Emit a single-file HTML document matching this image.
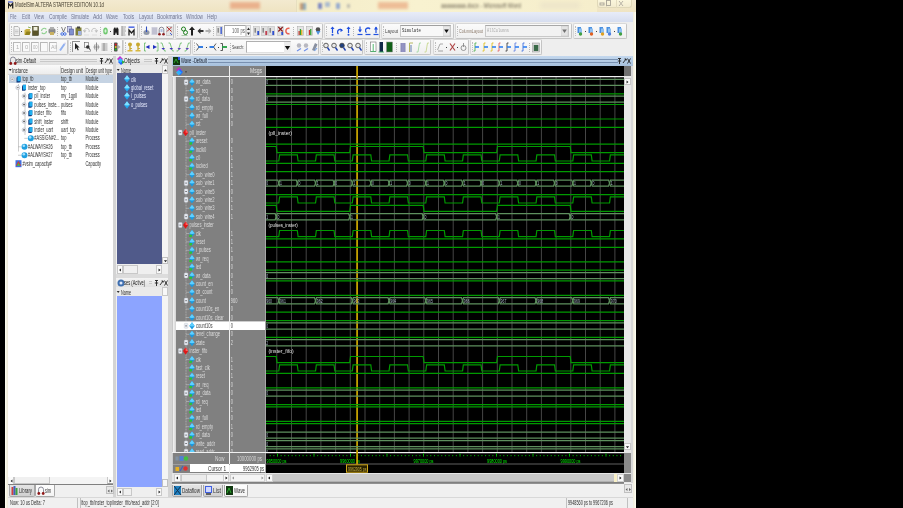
<!DOCTYPE html><html><head><meta charset="utf-8"><style>
*{margin:0;padding:0;box-sizing:border-box}
html,body{width:903px;height:508px;overflow:hidden;background:#000}
body{position:relative;font-family:"Liberation Sans",sans-serif}
div,span,svg{position:absolute}
.t{white-space:nowrap;transform-origin:0 0}
</style></head><body><div style="left:0;top:0;width:903px;height:508px;overflow:hidden;will-change:transform"><div style="left:5px;top:0px;width:631px;height:508px;background:#f0f0f0"></div><div style="left:5px;top:0px;width:3px;height:508px;background:linear-gradient(90deg,#fffff2,#ece8d8)"></div><div style="left:633px;top:0px;width:3px;height:508px;background:linear-gradient(90deg,#f0ecdc,#fffff2)"></div><div style="left:5px;top:0px;width:631px;height:12px;background:linear-gradient(180deg,#f3ead0,#efe4c2)"></div><div style="left:8px;top:12px;width:625px;height:10px;background:linear-gradient(180deg,#e8ecf8,#d6ddef)"></div><div style="left:8px;top:22px;width:625px;height:34px;background:#eeeeee"></div><div style="left:8px;top:56px;width:105px;height:428px;background:#ffffff"></div><div style="left:113px;top:56px;width:3px;height:441px;background:#d4d4d4"></div><div style="left:116px;top:56px;width:52px;height:9px;background:#e4e4e4"></div><div style="left:116px;top:65px;width:46px;height:8px;background:#eaeaea"></div><div style="left:117px;top:73px;width:45px;height:191px;background:#505a8a"></div><div style="left:162px;top:65px;width:6px;height:199px;background:#f4f4f4"></div><div style="left:116px;top:264px;width:52px;height:10px;background:#efefef"></div><div style="left:116px;top:274px;width:52px;height:4px;background:#dcdcdc"></div><div style="left:116px;top:278px;width:52px;height:9px;background:#e4e4e4"></div><div style="left:116px;top:287px;width:46px;height:9px;background:#eaeaea"></div><div style="left:117px;top:296px;width:45px;height:191px;background:#8ca4ff"></div><div style="left:162px;top:287px;width:6px;height:200px;background:#f4f4f4"></div><div style="left:116px;top:487px;width:52px;height:10px;background:#efefef"></div><div style="left:168px;top:56px;width:4px;height:441px;background:#d4d4d4"></div><div style="left:172px;top:56px;width:461px;height:10px;background:linear-gradient(180deg,#c4d8ee,#a6c0dc)"></div><div style="left:172px;top:66px;width:452px;height:11px;background:#808080"></div><div style="left:266px;top:66px;width:358px;height:11px;background:#000"></div><div style="left:172px;top:77px;width:94px;height:376px;background:#808080"></div><div style="left:266px;top:77px;width:358px;height:376px;background:#000"></div><div style="left:172px;top:453px;width:94px;height:20px;background:#808080"></div><div style="left:266px;top:453px;width:358px;height:20px;background:#000"></div><div style="left:624px;top:66px;width:8px;height:417px;background:#e8e8e8"></div><div style="left:172px;top:473px;width:452px;height:10px;background:#dddddd"></div><svg style="left:266.0px;top:66px" width="358.0" height="407" viewBox="266.0 66 358.0 407"><defs><clipPath id="rc"><rect x="266" y="77" width="358" height="375.2"/></clipPath></defs><g clip-path="url(#rc)"><line x1="276.80" y1="77" x2="276.80" y2="452.5" stroke="#464646" stroke-width="1"/><line x1="291.50" y1="77" x2="291.50" y2="452.5" stroke="#464646" stroke-width="1"/><line x1="306.20" y1="77" x2="306.20" y2="452.5" stroke="#464646" stroke-width="1"/><line x1="320.90" y1="77" x2="320.90" y2="452.5" stroke="#464646" stroke-width="1"/><line x1="335.60" y1="77" x2="335.60" y2="452.5" stroke="#464646" stroke-width="1"/><line x1="350.30" y1="77" x2="350.30" y2="452.5" stroke="#464646" stroke-width="1"/><line x1="365.00" y1="77" x2="365.00" y2="452.5" stroke="#464646" stroke-width="1"/><line x1="379.70" y1="77" x2="379.70" y2="452.5" stroke="#464646" stroke-width="1"/><line x1="394.40" y1="77" x2="394.40" y2="452.5" stroke="#464646" stroke-width="1"/><line x1="409.10" y1="77" x2="409.10" y2="452.5" stroke="#464646" stroke-width="1"/><line x1="423.80" y1="77" x2="423.80" y2="452.5" stroke="#464646" stroke-width="1"/><line x1="438.50" y1="77" x2="438.50" y2="452.5" stroke="#464646" stroke-width="1"/><line x1="453.20" y1="77" x2="453.20" y2="452.5" stroke="#464646" stroke-width="1"/><line x1="467.90" y1="77" x2="467.90" y2="452.5" stroke="#464646" stroke-width="1"/><line x1="482.60" y1="77" x2="482.60" y2="452.5" stroke="#464646" stroke-width="1"/><line x1="497.30" y1="77" x2="497.30" y2="452.5" stroke="#464646" stroke-width="1"/><line x1="512.00" y1="77" x2="512.00" y2="452.5" stroke="#464646" stroke-width="1"/><line x1="526.70" y1="77" x2="526.70" y2="452.5" stroke="#464646" stroke-width="1"/><line x1="541.40" y1="77" x2="541.40" y2="452.5" stroke="#464646" stroke-width="1"/><line x1="556.10" y1="77" x2="556.10" y2="452.5" stroke="#464646" stroke-width="1"/><line x1="570.80" y1="77" x2="570.80" y2="452.5" stroke="#464646" stroke-width="1"/><line x1="585.50" y1="77" x2="585.50" y2="452.5" stroke="#464646" stroke-width="1"/><line x1="600.20" y1="77" x2="600.20" y2="452.5" stroke="#464646" stroke-width="1"/><line x1="614.90" y1="77" x2="614.90" y2="452.5" stroke="#464646" stroke-width="1"/><line x1="357.1" y1="77" x2="357.1" y2="452" stroke="#c4a000" stroke-width="1.8"/><path d="M266.00,79.30 L266.00,79.30 L624.00,79.30 L624.00,79.30" fill="none" stroke="#5e905e" stroke-width="1.25"/><path d="M266.00,85.40 L266.00,85.40 L624.00,85.40 L624.00,85.40" fill="none" stroke="#5e905e" stroke-width="1.25"/><text x="266.30" y="84.40" font-size="5.2" fill="#a8b8c8" font-family="Liberation Sans" textLength="1.9" lengthAdjust="spacingAndGlyphs">0</text><line x1="266.0" y1="93.80" x2="624.0" y2="93.80" stroke="#009a00" stroke-width="1.2"/><path d="M266.00,96.10 L266.00,96.10 L624.00,96.10 L624.00,96.10" fill="none" stroke="#5e905e" stroke-width="1.25"/><path d="M266.00,102.20 L266.00,102.20 L624.00,102.20 L624.00,102.20" fill="none" stroke="#5e905e" stroke-width="1.25"/><text x="266.30" y="101.20" font-size="5.2" fill="#a8b8c8" font-family="Liberation Sans" textLength="1.9" lengthAdjust="spacingAndGlyphs">0</text><line x1="266.0" y1="104.50" x2="624.0" y2="104.50" stroke="#009a00" stroke-width="1.2"/><line x1="266.0" y1="119.00" x2="624.0" y2="119.00" stroke="#009a00" stroke-width="1.2"/><line x1="266.0" y1="127.40" x2="624.0" y2="127.40" stroke="#009a00" stroke-width="1.2"/><text x="268.5" y="134.70" font-size="5.6" fill="#e8e8e8" font-family="Liberation Sans" textLength="23.4" lengthAdjust="spacingAndGlyphs">(pll_inster)</text><line x1="266.0" y1="144.20" x2="624.0" y2="144.20" stroke="#009a00" stroke-width="1.2"/><path d="M266.00,146.50 L276.20,146.50 L277.00,152.60 L349.70,152.60 L350.50,146.50 L423.20,146.50 L424.00,152.60 L496.70,152.60 L497.50,146.50 L570.20,146.50 L571.00,152.60 L624.00,152.60" fill="none" stroke="#009a00" stroke-width="1.2"/><path d="M266.00,161.00 L278.80,161.00 L279.60,154.90 L297.30,154.90 L298.10,161.00 L315.55,161.00 L316.35,154.90 L334.05,154.90 L334.85,161.00 L352.30,161.00 L353.10,154.90 L370.80,154.90 L371.60,161.00 L389.05,161.00 L389.85,154.90 L407.55,154.90 L408.35,161.00 L425.80,161.00 L426.60,154.90 L444.30,154.90 L445.10,161.00 L462.55,161.00 L463.35,154.90 L481.05,154.90 L481.85,161.00 L499.30,161.00 L500.10,154.90 L517.80,154.90 L518.60,161.00 L536.05,161.00 L536.85,154.90 L554.55,154.90 L555.35,161.00 L572.80,161.00 L573.60,154.90 L591.30,154.90 L592.10,161.00 L609.55,161.00 L610.35,154.90 L624.00,154.90" fill="none" stroke="#009a00" stroke-width="1.2"/><line x1="266.0" y1="163.30" x2="624.0" y2="163.30" stroke="#009a00" stroke-width="1.2"/><line x1="266.0" y1="171.70" x2="624.0" y2="171.70" stroke="#009a00" stroke-width="1.2"/><path d="M266.00,180.10 L266.00,180.10 L277.80,180.10 L278.80,183.15" fill="none" stroke="#5e905e" stroke-width="1.25"/><path d="M266.00,186.20 L266.00,186.20 L277.80,186.20 L278.80,183.15" fill="none" stroke="#5e905e" stroke-width="1.25"/><text x="266.30" y="185.20" font-size="5.2" fill="#a8b8c8" font-family="Liberation Sans" textLength="1.9" lengthAdjust="spacingAndGlyphs">0</text><path d="M278.80,183.15 L279.80,180.10 L296.30,180.10 L297.30,183.15" fill="none" stroke="#5e905e" stroke-width="1.25"/><path d="M278.80,183.15 L279.80,186.20 L296.30,186.20 L297.30,183.15" fill="none" stroke="#5e905e" stroke-width="1.25"/><text x="280.10" y="185.20" font-size="5.2" fill="#a8b8c8" font-family="Liberation Sans" textLength="1.9" lengthAdjust="spacingAndGlyphs">1</text><path d="M297.30,183.15 L298.30,180.10 L314.55,180.10 L315.55,183.15" fill="none" stroke="#5e905e" stroke-width="1.25"/><path d="M297.30,183.15 L298.30,186.20 L314.55,186.20 L315.55,183.15" fill="none" stroke="#5e905e" stroke-width="1.25"/><text x="298.60" y="185.20" font-size="5.2" fill="#a8b8c8" font-family="Liberation Sans" textLength="1.9" lengthAdjust="spacingAndGlyphs">0</text><path d="M315.55,183.15 L316.55,180.10 L333.05,180.10 L334.05,183.15" fill="none" stroke="#5e905e" stroke-width="1.25"/><path d="M315.55,183.15 L316.55,186.20 L333.05,186.20 L334.05,183.15" fill="none" stroke="#5e905e" stroke-width="1.25"/><text x="316.85" y="185.20" font-size="5.2" fill="#a8b8c8" font-family="Liberation Sans" textLength="1.9" lengthAdjust="spacingAndGlyphs">1</text><path d="M334.05,183.15 L335.05,180.10 L351.30,180.10 L352.30,183.15" fill="none" stroke="#5e905e" stroke-width="1.25"/><path d="M334.05,183.15 L335.05,186.20 L351.30,186.20 L352.30,183.15" fill="none" stroke="#5e905e" stroke-width="1.25"/><text x="335.35" y="185.20" font-size="5.2" fill="#a8b8c8" font-family="Liberation Sans" textLength="1.9" lengthAdjust="spacingAndGlyphs">0</text><path d="M352.30,183.15 L353.30,180.10 L369.80,180.10 L370.80,183.15" fill="none" stroke="#5e905e" stroke-width="1.25"/><path d="M352.30,183.15 L353.30,186.20 L369.80,186.20 L370.80,183.15" fill="none" stroke="#5e905e" stroke-width="1.25"/><text x="353.60" y="185.20" font-size="5.2" fill="#a8b8c8" font-family="Liberation Sans" textLength="1.9" lengthAdjust="spacingAndGlyphs">1</text><path d="M370.80,183.15 L371.80,180.10 L388.05,180.10 L389.05,183.15" fill="none" stroke="#5e905e" stroke-width="1.25"/><path d="M370.80,183.15 L371.80,186.20 L388.05,186.20 L389.05,183.15" fill="none" stroke="#5e905e" stroke-width="1.25"/><text x="372.10" y="185.20" font-size="5.2" fill="#a8b8c8" font-family="Liberation Sans" textLength="1.9" lengthAdjust="spacingAndGlyphs">0</text><path d="M389.05,183.15 L390.05,180.10 L406.55,180.10 L407.55,183.15" fill="none" stroke="#5e905e" stroke-width="1.25"/><path d="M389.05,183.15 L390.05,186.20 L406.55,186.20 L407.55,183.15" fill="none" stroke="#5e905e" stroke-width="1.25"/><text x="390.35" y="185.20" font-size="5.2" fill="#a8b8c8" font-family="Liberation Sans" textLength="1.9" lengthAdjust="spacingAndGlyphs">1</text><path d="M407.55,183.15 L408.55,180.10 L424.80,180.10 L425.80,183.15" fill="none" stroke="#5e905e" stroke-width="1.25"/><path d="M407.55,183.15 L408.55,186.20 L424.80,186.20 L425.80,183.15" fill="none" stroke="#5e905e" stroke-width="1.25"/><text x="408.85" y="185.20" font-size="5.2" fill="#a8b8c8" font-family="Liberation Sans" textLength="1.9" lengthAdjust="spacingAndGlyphs">0</text><path d="M425.80,183.15 L426.80,180.10 L443.30,180.10 L444.30,183.15" fill="none" stroke="#5e905e" stroke-width="1.25"/><path d="M425.80,183.15 L426.80,186.20 L443.30,186.20 L444.30,183.15" fill="none" stroke="#5e905e" stroke-width="1.25"/><text x="427.10" y="185.20" font-size="5.2" fill="#a8b8c8" font-family="Liberation Sans" textLength="1.9" lengthAdjust="spacingAndGlyphs">1</text><path d="M444.30,183.15 L445.30,180.10 L461.55,180.10 L462.55,183.15" fill="none" stroke="#5e905e" stroke-width="1.25"/><path d="M444.30,183.15 L445.30,186.20 L461.55,186.20 L462.55,183.15" fill="none" stroke="#5e905e" stroke-width="1.25"/><text x="445.60" y="185.20" font-size="5.2" fill="#a8b8c8" font-family="Liberation Sans" textLength="1.9" lengthAdjust="spacingAndGlyphs">0</text><path d="M462.55,183.15 L463.55,180.10 L480.05,180.10 L481.05,183.15" fill="none" stroke="#5e905e" stroke-width="1.25"/><path d="M462.55,183.15 L463.55,186.20 L480.05,186.20 L481.05,183.15" fill="none" stroke="#5e905e" stroke-width="1.25"/><text x="463.85" y="185.20" font-size="5.2" fill="#a8b8c8" font-family="Liberation Sans" textLength="1.9" lengthAdjust="spacingAndGlyphs">1</text><path d="M481.05,183.15 L482.05,180.10 L498.30,180.10 L499.30,183.15" fill="none" stroke="#5e905e" stroke-width="1.25"/><path d="M481.05,183.15 L482.05,186.20 L498.30,186.20 L499.30,183.15" fill="none" stroke="#5e905e" stroke-width="1.25"/><text x="482.35" y="185.20" font-size="5.2" fill="#a8b8c8" font-family="Liberation Sans" textLength="1.9" lengthAdjust="spacingAndGlyphs">0</text><path d="M499.30,183.15 L500.30,180.10 L516.80,180.10 L517.80,183.15" fill="none" stroke="#5e905e" stroke-width="1.25"/><path d="M499.30,183.15 L500.30,186.20 L516.80,186.20 L517.80,183.15" fill="none" stroke="#5e905e" stroke-width="1.25"/><text x="500.60" y="185.20" font-size="5.2" fill="#a8b8c8" font-family="Liberation Sans" textLength="1.9" lengthAdjust="spacingAndGlyphs">1</text><path d="M517.80,183.15 L518.80,180.10 L535.05,180.10 L536.05,183.15" fill="none" stroke="#5e905e" stroke-width="1.25"/><path d="M517.80,183.15 L518.80,186.20 L535.05,186.20 L536.05,183.15" fill="none" stroke="#5e905e" stroke-width="1.25"/><text x="519.10" y="185.20" font-size="5.2" fill="#a8b8c8" font-family="Liberation Sans" textLength="1.9" lengthAdjust="spacingAndGlyphs">0</text><path d="M536.05,183.15 L537.05,180.10 L553.55,180.10 L554.55,183.15" fill="none" stroke="#5e905e" stroke-width="1.25"/><path d="M536.05,183.15 L537.05,186.20 L553.55,186.20 L554.55,183.15" fill="none" stroke="#5e905e" stroke-width="1.25"/><text x="537.35" y="185.20" font-size="5.2" fill="#a8b8c8" font-family="Liberation Sans" textLength="1.9" lengthAdjust="spacingAndGlyphs">1</text><path d="M554.55,183.15 L555.55,180.10 L571.80,180.10 L572.80,183.15" fill="none" stroke="#5e905e" stroke-width="1.25"/><path d="M554.55,183.15 L555.55,186.20 L571.80,186.20 L572.80,183.15" fill="none" stroke="#5e905e" stroke-width="1.25"/><text x="555.85" y="185.20" font-size="5.2" fill="#a8b8c8" font-family="Liberation Sans" textLength="1.9" lengthAdjust="spacingAndGlyphs">0</text><path d="M572.80,183.15 L573.80,180.10 L590.30,180.10 L591.30,183.15" fill="none" stroke="#5e905e" stroke-width="1.25"/><path d="M572.80,183.15 L573.80,186.20 L590.30,186.20 L591.30,183.15" fill="none" stroke="#5e905e" stroke-width="1.25"/><text x="574.10" y="185.20" font-size="5.2" fill="#a8b8c8" font-family="Liberation Sans" textLength="1.9" lengthAdjust="spacingAndGlyphs">1</text><path d="M591.30,183.15 L592.30,180.10 L608.55,180.10 L609.55,183.15" fill="none" stroke="#5e905e" stroke-width="1.25"/><path d="M591.30,183.15 L592.30,186.20 L608.55,186.20 L609.55,183.15" fill="none" stroke="#5e905e" stroke-width="1.25"/><text x="592.60" y="185.20" font-size="5.2" fill="#a8b8c8" font-family="Liberation Sans" textLength="1.9" lengthAdjust="spacingAndGlyphs">0</text><path d="M609.55,183.15 L610.55,180.10 L624.00,180.10 L624.00,180.10" fill="none" stroke="#5e905e" stroke-width="1.25"/><path d="M609.55,183.15 L610.55,186.20 L624.00,186.20 L624.00,186.20" fill="none" stroke="#5e905e" stroke-width="1.25"/><text x="610.85" y="185.20" font-size="5.2" fill="#a8b8c8" font-family="Liberation Sans" textLength="1.9" lengthAdjust="spacingAndGlyphs">1</text><line x1="266.0" y1="194.60" x2="624.0" y2="194.60" stroke="#009a00" stroke-width="1.2"/><path d="M266.00,203.00 L278.80,203.00 L279.60,196.90 L297.30,196.90 L298.10,203.00 L315.55,203.00 L316.35,196.90 L334.05,196.90 L334.85,203.00 L352.30,203.00 L353.10,196.90 L370.80,196.90 L371.60,203.00 L389.05,203.00 L389.85,196.90 L407.55,196.90 L408.35,203.00 L425.80,203.00 L426.60,196.90 L444.30,196.90 L445.10,203.00 L462.55,203.00 L463.35,196.90 L481.05,196.90 L481.85,203.00 L499.30,203.00 L500.10,196.90 L517.80,196.90 L518.60,203.00 L536.05,203.00 L536.85,196.90 L554.55,196.90 L555.35,203.00 L572.80,203.00 L573.60,196.90 L591.30,196.90 L592.10,203.00 L609.55,203.00 L610.35,196.90 L624.00,196.90" fill="none" stroke="#009a00" stroke-width="1.2"/><path d="M266.00,205.30 L276.20,205.30 L277.00,211.40 L349.70,211.40 L350.50,205.30 L423.20,205.30 L424.00,211.40 L496.70,211.40 L497.50,205.30 L570.20,205.30 L571.00,211.40 L624.00,211.40" fill="none" stroke="#009a00" stroke-width="1.2"/><path d="M266.00,213.70 L266.00,213.70 L275.20,213.70 L276.20,216.75" fill="none" stroke="#5e905e" stroke-width="1.25"/><path d="M266.00,219.80 L266.00,219.80 L275.20,219.80 L276.20,216.75" fill="none" stroke="#5e905e" stroke-width="1.25"/><text x="266.30" y="218.80" font-size="5.2" fill="#a8b8c8" font-family="Liberation Sans" textLength="1.9" lengthAdjust="spacingAndGlyphs">1</text><path d="M276.20,216.75 L277.20,213.70 L348.70,213.70 L349.70,216.75" fill="none" stroke="#5e905e" stroke-width="1.25"/><path d="M276.20,216.75 L277.20,219.80 L348.70,219.80 L349.70,216.75" fill="none" stroke="#5e905e" stroke-width="1.25"/><text x="277.50" y="218.80" font-size="5.2" fill="#a8b8c8" font-family="Liberation Sans" textLength="1.9" lengthAdjust="spacingAndGlyphs">0</text><path d="M349.70,216.75 L350.70,213.70 L422.20,213.70 L423.20,216.75" fill="none" stroke="#5e905e" stroke-width="1.25"/><path d="M349.70,216.75 L350.70,219.80 L422.20,219.80 L423.20,216.75" fill="none" stroke="#5e905e" stroke-width="1.25"/><text x="351.00" y="218.80" font-size="5.2" fill="#a8b8c8" font-family="Liberation Sans" textLength="1.9" lengthAdjust="spacingAndGlyphs">1</text><path d="M423.20,216.75 L424.20,213.70 L495.70,213.70 L496.70,216.75" fill="none" stroke="#5e905e" stroke-width="1.25"/><path d="M423.20,216.75 L424.20,219.80 L495.70,219.80 L496.70,216.75" fill="none" stroke="#5e905e" stroke-width="1.25"/><text x="424.50" y="218.80" font-size="5.2" fill="#a8b8c8" font-family="Liberation Sans" textLength="1.9" lengthAdjust="spacingAndGlyphs">0</text><path d="M496.70,216.75 L497.70,213.70 L569.20,213.70 L570.20,216.75" fill="none" stroke="#5e905e" stroke-width="1.25"/><path d="M496.70,216.75 L497.70,219.80 L569.20,219.80 L570.20,216.75" fill="none" stroke="#5e905e" stroke-width="1.25"/><text x="498.00" y="218.80" font-size="5.2" fill="#a8b8c8" font-family="Liberation Sans" textLength="1.9" lengthAdjust="spacingAndGlyphs">1</text><path d="M570.20,216.75 L571.20,213.70 L624.00,213.70 L624.00,213.70" fill="none" stroke="#5e905e" stroke-width="1.25"/><path d="M570.20,216.75 L571.20,219.80 L624.00,219.80 L624.00,219.80" fill="none" stroke="#5e905e" stroke-width="1.25"/><text x="571.50" y="218.80" font-size="5.2" fill="#a8b8c8" font-family="Liberation Sans" textLength="1.9" lengthAdjust="spacingAndGlyphs">0</text><text x="268.5" y="227.10" font-size="5.6" fill="#e8e8e8" font-family="Liberation Sans" textLength="29.2" lengthAdjust="spacingAndGlyphs">(pulses_inster)</text><path d="M266.00,236.60 L278.80,236.60 L279.60,230.50 L297.30,230.50 L298.10,236.60 L315.55,236.60 L316.35,230.50 L334.05,230.50 L334.85,236.60 L352.30,236.60 L353.10,230.50 L370.80,230.50 L371.60,236.60 L389.05,236.60 L389.85,230.50 L407.55,230.50 L408.35,236.60 L425.80,236.60 L426.60,230.50 L444.30,230.50 L445.10,236.60 L462.55,236.60 L463.35,230.50 L481.05,230.50 L481.85,236.60 L499.30,236.60 L500.10,230.50 L517.80,230.50 L518.60,236.60 L536.05,236.60 L536.85,230.50 L554.55,230.50 L555.35,236.60 L572.80,236.60 L573.60,230.50 L591.30,230.50 L592.10,236.60 L609.55,236.60 L610.35,230.50 L624.00,230.50" fill="none" stroke="#009a00" stroke-width="1.2"/><line x1="266.0" y1="238.90" x2="624.0" y2="238.90" stroke="#009a00" stroke-width="1.2"/><line x1="266.0" y1="247.30" x2="624.0" y2="247.30" stroke="#009a00" stroke-width="1.2"/><line x1="266.0" y1="261.80" x2="624.0" y2="261.80" stroke="#009a00" stroke-width="1.2"/><line x1="266.0" y1="270.20" x2="624.0" y2="270.20" stroke="#009a00" stroke-width="1.2"/><path d="M266.00,272.50 L266.00,272.50 L624.00,272.50 L624.00,272.50" fill="none" stroke="#5e905e" stroke-width="1.25"/><path d="M266.00,278.60 L266.00,278.60 L624.00,278.60 L624.00,278.60" fill="none" stroke="#5e905e" stroke-width="1.25"/><text x="266.30" y="277.60" font-size="5.2" fill="#a8b8c8" font-family="Liberation Sans" textLength="1.9" lengthAdjust="spacingAndGlyphs">0</text><line x1="266.0" y1="280.90" x2="624.0" y2="280.90" stroke="#009a00" stroke-width="1.2"/><line x1="266.0" y1="295.40" x2="624.0" y2="295.40" stroke="#009a00" stroke-width="1.2"/><path d="M266.00,297.70 L266.00,297.70 L277.80,297.70 L278.80,300.75" fill="none" stroke="#5e905e" stroke-width="1.25"/><path d="M266.00,303.80 L266.00,303.80 L277.80,303.80 L278.80,300.75" fill="none" stroke="#5e905e" stroke-width="1.25"/><text x="266.30" y="302.80" font-size="5.2" fill="#a8b8c8" font-family="Liberation Sans" textLength="5.7" lengthAdjust="spacingAndGlyphs">960</text><path d="M278.80,300.75 L279.80,297.70 L314.55,297.70 L315.55,300.75" fill="none" stroke="#5e905e" stroke-width="1.25"/><path d="M278.80,300.75 L279.80,303.80 L314.55,303.80 L315.55,300.75" fill="none" stroke="#5e905e" stroke-width="1.25"/><text x="280.10" y="302.80" font-size="5.2" fill="#a8b8c8" font-family="Liberation Sans" textLength="5.7" lengthAdjust="spacingAndGlyphs">961</text><path d="M315.55,300.75 L316.55,297.70 L351.30,297.70 L352.30,300.75" fill="none" stroke="#5e905e" stroke-width="1.25"/><path d="M315.55,300.75 L316.55,303.80 L351.30,303.80 L352.30,300.75" fill="none" stroke="#5e905e" stroke-width="1.25"/><text x="316.85" y="302.80" font-size="5.2" fill="#a8b8c8" font-family="Liberation Sans" textLength="5.7" lengthAdjust="spacingAndGlyphs">962</text><path d="M352.30,300.75 L353.30,297.70 L388.05,297.70 L389.05,300.75" fill="none" stroke="#5e905e" stroke-width="1.25"/><path d="M352.30,300.75 L353.30,303.80 L388.05,303.80 L389.05,300.75" fill="none" stroke="#5e905e" stroke-width="1.25"/><text x="353.60" y="302.80" font-size="5.2" fill="#a8b8c8" font-family="Liberation Sans" textLength="5.7" lengthAdjust="spacingAndGlyphs">963</text><path d="M389.05,300.75 L390.05,297.70 L424.80,297.70 L425.80,300.75" fill="none" stroke="#5e905e" stroke-width="1.25"/><path d="M389.05,300.75 L390.05,303.80 L424.80,303.80 L425.80,300.75" fill="none" stroke="#5e905e" stroke-width="1.25"/><text x="390.35" y="302.80" font-size="5.2" fill="#a8b8c8" font-family="Liberation Sans" textLength="5.7" lengthAdjust="spacingAndGlyphs">964</text><path d="M425.80,300.75 L426.80,297.70 L461.55,297.70 L462.55,300.75" fill="none" stroke="#5e905e" stroke-width="1.25"/><path d="M425.80,300.75 L426.80,303.80 L461.55,303.80 L462.55,300.75" fill="none" stroke="#5e905e" stroke-width="1.25"/><text x="427.10" y="302.80" font-size="5.2" fill="#a8b8c8" font-family="Liberation Sans" textLength="5.7" lengthAdjust="spacingAndGlyphs">965</text><path d="M462.55,300.75 L463.55,297.70 L498.30,297.70 L499.30,300.75" fill="none" stroke="#5e905e" stroke-width="1.25"/><path d="M462.55,300.75 L463.55,303.80 L498.30,303.80 L499.30,300.75" fill="none" stroke="#5e905e" stroke-width="1.25"/><text x="463.85" y="302.80" font-size="5.2" fill="#a8b8c8" font-family="Liberation Sans" textLength="5.7" lengthAdjust="spacingAndGlyphs">966</text><path d="M499.30,300.75 L500.30,297.70 L535.05,297.70 L536.05,300.75" fill="none" stroke="#5e905e" stroke-width="1.25"/><path d="M499.30,300.75 L500.30,303.80 L535.05,303.80 L536.05,300.75" fill="none" stroke="#5e905e" stroke-width="1.25"/><text x="500.60" y="302.80" font-size="5.2" fill="#a8b8c8" font-family="Liberation Sans" textLength="5.7" lengthAdjust="spacingAndGlyphs">967</text><path d="M536.05,300.75 L537.05,297.70 L571.80,297.70 L572.80,300.75" fill="none" stroke="#5e905e" stroke-width="1.25"/><path d="M536.05,300.75 L537.05,303.80 L571.80,303.80 L572.80,300.75" fill="none" stroke="#5e905e" stroke-width="1.25"/><text x="537.35" y="302.80" font-size="5.2" fill="#a8b8c8" font-family="Liberation Sans" textLength="5.7" lengthAdjust="spacingAndGlyphs">968</text><path d="M572.80,300.75 L573.80,297.70 L608.55,297.70 L609.55,300.75" fill="none" stroke="#5e905e" stroke-width="1.25"/><path d="M572.80,300.75 L573.80,303.80 L608.55,303.80 L609.55,300.75" fill="none" stroke="#5e905e" stroke-width="1.25"/><text x="574.10" y="302.80" font-size="5.2" fill="#a8b8c8" font-family="Liberation Sans" textLength="5.7" lengthAdjust="spacingAndGlyphs">969</text><path d="M609.55,300.75 L610.55,297.70 L624.00,297.70 L624.00,297.70" fill="none" stroke="#5e905e" stroke-width="1.25"/><path d="M609.55,300.75 L610.55,303.80 L624.00,303.80 L624.00,303.80" fill="none" stroke="#5e905e" stroke-width="1.25"/><text x="610.85" y="302.80" font-size="5.2" fill="#a8b8c8" font-family="Liberation Sans" textLength="5.7" lengthAdjust="spacingAndGlyphs">970</text><line x1="266.0" y1="312.20" x2="624.0" y2="312.20" stroke="#009a00" stroke-width="1.2"/><line x1="266.0" y1="320.60" x2="624.0" y2="320.60" stroke="#009a00" stroke-width="1.2"/><path d="M266.00,322.90 L266.00,322.90 L624.00,322.90 L624.00,322.90" fill="none" stroke="#5e905e" stroke-width="1.25"/><path d="M266.00,329.00 L266.00,329.00 L624.00,329.00 L624.00,329.00" fill="none" stroke="#5e905e" stroke-width="1.25"/><text x="266.30" y="328.00" font-size="5.2" fill="#a8b8c8" font-family="Liberation Sans" textLength="1.9" lengthAdjust="spacingAndGlyphs">0</text><line x1="266.0" y1="337.40" x2="624.0" y2="337.40" stroke="#009a00" stroke-width="1.2"/><path d="M266.00,339.70 L266.00,339.70 L624.00,339.70 L624.00,339.70" fill="none" stroke="#5e905e" stroke-width="1.25"/><path d="M266.00,345.80 L266.00,345.80 L624.00,345.80 L624.00,345.80" fill="none" stroke="#5e905e" stroke-width="1.25"/><text x="266.30" y="344.80" font-size="5.2" fill="#a8b8c8" font-family="Liberation Sans" textLength="1.9" lengthAdjust="spacingAndGlyphs">2</text><text x="268.5" y="353.10" font-size="5.6" fill="#e8e8e8" font-family="Liberation Sans" textLength="25.3" lengthAdjust="spacingAndGlyphs">(inster_fifo)</text><path d="M266.00,356.50 L276.20,356.50 L277.00,362.60 L349.70,362.60 L350.50,356.50 L423.20,356.50 L424.00,362.60 L496.70,362.60 L497.50,356.50 L570.20,356.50 L571.00,362.60 L624.00,362.60" fill="none" stroke="#009a00" stroke-width="1.2"/><path d="M266.00,371.00 L278.80,371.00 L279.60,364.90 L297.30,364.90 L298.10,371.00 L315.55,371.00 L316.35,364.90 L334.05,364.90 L334.85,371.00 L352.30,371.00 L353.10,364.90 L370.80,364.90 L371.60,371.00 L389.05,371.00 L389.85,364.90 L407.55,364.90 L408.35,371.00 L425.80,371.00 L426.60,364.90 L444.30,364.90 L445.10,371.00 L462.55,371.00 L463.35,364.90 L481.05,364.90 L481.85,371.00 L499.30,371.00 L500.10,364.90 L517.80,364.90 L518.60,371.00 L536.05,371.00 L536.85,364.90 L554.55,364.90 L555.35,371.00 L572.80,371.00 L573.60,364.90 L591.30,364.90 L592.10,371.00 L609.55,371.00 L610.35,364.90 L624.00,364.90" fill="none" stroke="#009a00" stroke-width="1.2"/><line x1="266.0" y1="373.30" x2="624.0" y2="373.30" stroke="#009a00" stroke-width="1.2"/><line x1="266.0" y1="387.80" x2="624.0" y2="387.80" stroke="#009a00" stroke-width="1.2"/><path d="M266.00,390.10 L266.00,390.10 L624.00,390.10 L624.00,390.10" fill="none" stroke="#5e905e" stroke-width="1.25"/><path d="M266.00,396.20 L266.00,396.20 L624.00,396.20 L624.00,396.20" fill="none" stroke="#5e905e" stroke-width="1.25"/><text x="266.30" y="395.20" font-size="5.2" fill="#a8b8c8" font-family="Liberation Sans" textLength="1.9" lengthAdjust="spacingAndGlyphs">0</text><line x1="266.0" y1="404.60" x2="624.0" y2="404.60" stroke="#009a00" stroke-width="1.2"/><line x1="266.0" y1="406.90" x2="624.0" y2="406.90" stroke="#009a00" stroke-width="1.2"/><line x1="266.0" y1="421.40" x2="624.0" y2="421.40" stroke="#009a00" stroke-width="1.2"/><line x1="266.0" y1="423.70" x2="624.0" y2="423.70" stroke="#009a00" stroke-width="1.2"/><path d="M266.00,432.10 L266.00,432.10 L624.00,432.10 L624.00,432.10" fill="none" stroke="#5e905e" stroke-width="1.25"/><path d="M266.00,438.20 L266.00,438.20 L624.00,438.20 L624.00,438.20" fill="none" stroke="#5e905e" stroke-width="1.25"/><text x="266.30" y="437.20" font-size="5.2" fill="#a8b8c8" font-family="Liberation Sans" textLength="1.9" lengthAdjust="spacingAndGlyphs">0</text><path d="M266.00,440.50 L266.00,440.50 L624.00,440.50 L624.00,440.50" fill="none" stroke="#5e905e" stroke-width="1.25"/><path d="M266.00,446.60 L266.00,446.60 L624.00,446.60 L624.00,446.60" fill="none" stroke="#5e905e" stroke-width="1.25"/><text x="266.30" y="445.60" font-size="5.2" fill="#a8b8c8" font-family="Liberation Sans" textLength="1.9" lengthAdjust="spacingAndGlyphs">0</text><path d="M266.00,448.90 L266.00,448.90 L624.00,448.90 L624.00,448.90" fill="none" stroke="#5e905e" stroke-width="1.25"/><path d="M266.00,455.00 L266.00,455.00 L624.00,455.00 L624.00,455.00" fill="none" stroke="#5e905e" stroke-width="1.25"/><text x="266.30" y="454.00" font-size="5.2" fill="#a8b8c8" font-family="Liberation Sans" textLength="1.9" lengthAdjust="spacingAndGlyphs">0</text></g><line x1="266" y1="76.6" x2="624" y2="76.6" stroke="#f0f0f0" stroke-width="1.2"/><line x1="266" y1="452.6" x2="624" y2="452.6" stroke="#f0f0f0" stroke-width="1.2"/><rect x="269.70" y="455" width="1" height="1.2" fill="#00a800"/><rect x="273.35" y="455" width="1" height="1.2" fill="#00a800"/><rect x="277.00" y="453.4" width="1" height="3.2" fill="#00b000"/><rect x="280.65" y="455" width="1" height="1.2" fill="#00a800"/><rect x="284.30" y="455" width="1" height="1.2" fill="#00a800"/><rect x="287.95" y="455" width="1" height="1.2" fill="#00a800"/><rect x="291.60" y="455" width="1" height="1.2" fill="#00a800"/><rect x="295.25" y="455" width="1" height="1.2" fill="#00a800"/><rect x="298.90" y="455" width="1" height="1.2" fill="#00a800"/><rect x="302.55" y="455" width="1" height="1.2" fill="#00a800"/><rect x="306.20" y="455" width="1" height="1.2" fill="#00a800"/><rect x="309.85" y="455" width="1" height="1.2" fill="#00a800"/><rect x="313.50" y="453.4" width="1" height="3.2" fill="#00b000"/><rect x="317.15" y="455" width="1" height="1.2" fill="#00a800"/><rect x="320.80" y="455" width="1" height="1.2" fill="#00a800"/><rect x="324.45" y="455" width="1" height="1.2" fill="#00a800"/><rect x="328.10" y="455" width="1" height="1.2" fill="#00a800"/><rect x="331.75" y="455" width="1" height="1.2" fill="#00a800"/><rect x="335.40" y="455" width="1" height="1.2" fill="#00a800"/><rect x="339.05" y="455" width="1" height="1.2" fill="#00a800"/><rect x="342.70" y="455" width="1" height="1.2" fill="#00a800"/><rect x="346.35" y="455" width="1" height="1.2" fill="#00a800"/><rect x="350.00" y="453.4" width="1" height="3.2" fill="#00b000"/><rect x="353.65" y="455" width="1" height="1.2" fill="#00a800"/><rect x="357.30" y="455" width="1" height="1.2" fill="#00a800"/><rect x="360.95" y="455" width="1" height="1.2" fill="#00a800"/><rect x="364.60" y="455" width="1" height="1.2" fill="#00a800"/><rect x="368.25" y="455" width="1" height="1.2" fill="#00a800"/><rect x="371.90" y="455" width="1" height="1.2" fill="#00a800"/><rect x="375.55" y="455" width="1" height="1.2" fill="#00a800"/><rect x="379.20" y="455" width="1" height="1.2" fill="#00a800"/><rect x="382.85" y="455" width="1" height="1.2" fill="#00a800"/><rect x="386.50" y="453.4" width="1" height="3.2" fill="#00b000"/><rect x="390.15" y="455" width="1" height="1.2" fill="#00a800"/><rect x="393.80" y="455" width="1" height="1.2" fill="#00a800"/><rect x="397.45" y="455" width="1" height="1.2" fill="#00a800"/><rect x="401.10" y="455" width="1" height="1.2" fill="#00a800"/><rect x="404.75" y="455" width="1" height="1.2" fill="#00a800"/><rect x="408.40" y="455" width="1" height="1.2" fill="#00a800"/><rect x="412.05" y="455" width="1" height="1.2" fill="#00a800"/><rect x="415.70" y="455" width="1" height="1.2" fill="#00a800"/><rect x="419.35" y="455" width="1" height="1.2" fill="#00a800"/><rect x="423.00" y="453.4" width="1" height="3.2" fill="#00b000"/><rect x="426.65" y="455" width="1" height="1.2" fill="#00a800"/><rect x="430.30" y="455" width="1" height="1.2" fill="#00a800"/><rect x="433.95" y="455" width="1" height="1.2" fill="#00a800"/><rect x="437.60" y="455" width="1" height="1.2" fill="#00a800"/><rect x="441.25" y="455" width="1" height="1.2" fill="#00a800"/><rect x="444.90" y="455" width="1" height="1.2" fill="#00a800"/><rect x="448.55" y="455" width="1" height="1.2" fill="#00a800"/><rect x="452.20" y="455" width="1" height="1.2" fill="#00a800"/><rect x="455.85" y="455" width="1" height="1.2" fill="#00a800"/><rect x="459.50" y="453.4" width="1" height="3.2" fill="#00b000"/><rect x="463.15" y="455" width="1" height="1.2" fill="#00a800"/><rect x="466.80" y="455" width="1" height="1.2" fill="#00a800"/><rect x="470.45" y="455" width="1" height="1.2" fill="#00a800"/><rect x="474.10" y="455" width="1" height="1.2" fill="#00a800"/><rect x="477.75" y="455" width="1" height="1.2" fill="#00a800"/><rect x="481.40" y="455" width="1" height="1.2" fill="#00a800"/><rect x="485.05" y="455" width="1" height="1.2" fill="#00a800"/><rect x="488.70" y="455" width="1" height="1.2" fill="#00a800"/><rect x="492.35" y="455" width="1" height="1.2" fill="#00a800"/><rect x="496.00" y="453.4" width="1" height="3.2" fill="#00b000"/><rect x="499.65" y="455" width="1" height="1.2" fill="#00a800"/><rect x="503.30" y="455" width="1" height="1.2" fill="#00a800"/><rect x="506.95" y="455" width="1" height="1.2" fill="#00a800"/><rect x="510.60" y="455" width="1" height="1.2" fill="#00a800"/><rect x="514.25" y="455" width="1" height="1.2" fill="#00a800"/><rect x="517.90" y="455" width="1" height="1.2" fill="#00a800"/><rect x="521.55" y="455" width="1" height="1.2" fill="#00a800"/><rect x="525.20" y="455" width="1" height="1.2" fill="#00a800"/><rect x="528.85" y="455" width="1" height="1.2" fill="#00a800"/><rect x="532.50" y="453.4" width="1" height="3.2" fill="#00b000"/><rect x="536.15" y="455" width="1" height="1.2" fill="#00a800"/><rect x="539.80" y="455" width="1" height="1.2" fill="#00a800"/><rect x="543.45" y="455" width="1" height="1.2" fill="#00a800"/><rect x="547.10" y="455" width="1" height="1.2" fill="#00a800"/><rect x="550.75" y="455" width="1" height="1.2" fill="#00a800"/><rect x="554.40" y="455" width="1" height="1.2" fill="#00a800"/><rect x="558.05" y="455" width="1" height="1.2" fill="#00a800"/><rect x="561.70" y="455" width="1" height="1.2" fill="#00a800"/><rect x="565.35" y="455" width="1" height="1.2" fill="#00a800"/><rect x="569.00" y="453.4" width="1" height="3.2" fill="#00b000"/><rect x="572.65" y="455" width="1" height="1.2" fill="#00a800"/><rect x="576.30" y="455" width="1" height="1.2" fill="#00a800"/><rect x="579.95" y="455" width="1" height="1.2" fill="#00a800"/><rect x="583.60" y="455" width="1" height="1.2" fill="#00a800"/><rect x="587.25" y="455" width="1" height="1.2" fill="#00a800"/><rect x="590.90" y="455" width="1" height="1.2" fill="#00a800"/><rect x="594.55" y="455" width="1" height="1.2" fill="#00a800"/><rect x="598.20" y="455" width="1" height="1.2" fill="#00a800"/><rect x="601.85" y="455" width="1" height="1.2" fill="#00a800"/><rect x="605.50" y="453.4" width="1" height="3.2" fill="#00b000"/><rect x="609.15" y="455" width="1" height="1.2" fill="#00a800"/><rect x="612.80" y="455" width="1" height="1.2" fill="#00a800"/><rect x="616.45" y="455" width="1" height="1.2" fill="#00a800"/><rect x="620.10" y="455" width="1" height="1.2" fill="#00a800"/><text x="266.50" y="463" font-size="5.8" fill="#00f000" font-family="Liberation Sans" textLength="20" lengthAdjust="spacingAndGlyphs">9950000 ps</text><text x="340.00" y="463" font-size="5.8" fill="#00f000" font-family="Liberation Sans" textLength="20" lengthAdjust="spacingAndGlyphs">9960000 ps</text><text x="413.50" y="463" font-size="5.8" fill="#00f000" font-family="Liberation Sans" textLength="20" lengthAdjust="spacingAndGlyphs">9970000 ps</text><text x="487.00" y="463" font-size="5.8" fill="#00f000" font-family="Liberation Sans" textLength="20" lengthAdjust="spacingAndGlyphs">9980000 ps</text><text x="560.50" y="463" font-size="5.8" fill="#00f000" font-family="Liberation Sans" textLength="20" lengthAdjust="spacingAndGlyphs">9990000 ps</text><line x1="266" y1="464" x2="624" y2="464" stroke="#606060" stroke-width="1"/><line x1="357.1" y1="66" x2="357.1" y2="77" stroke="#c4a000" stroke-width="1.8"/><line x1="357.1" y1="452" x2="357.1" y2="464.5" stroke="#c4a000" stroke-width="1.8"/><rect x="346.5" y="464.8" width="21" height="7.4" fill="#282000" stroke="#d0a818" stroke-width="1"/><text x="348" y="471" font-size="5.6" fill="#c8b040" font-family="Liberation Sans" textLength="18.5" lengthAdjust="spacingAndGlyphs">9962905 ps</text></svg><div style="left:172px;top:66px;width:1px;height:417px;background:#c8c8c8"></div><div style="left:173px;top:77px;width:3px;height:376px;background:linear-gradient(90deg,#f4f4f4,#d0d0d0)"></div><div style="left:229px;top:66px;width:1px;height:407px;background:#f0f0f0"></div><div style="left:265px;top:66px;width:1px;height:407px;background:#a8a8a8"></div><svg style="left:175px;top:67px" width="14" height="9" viewBox="0 0 14 9"><path d="M4,0 L7,3 L4,6 L1,3Z" fill="#c030c0"/><path d="M5,2 L8,5 L5,8.5 L2,5Z" fill="#2070ff"/><path d="M3.5,3 L6.5,5.5 L3.5,8.5 L1,5.5Z" fill="#30c0ff" opacity="0.8"/><path d="M10,4.5 L12,4.5 L11,5.8Z" fill="#202020"/></svg><span class="t" style="left:250px;top:68px;font-size:6.5px;line-height:6.5px;color:#e0e0e0;transform:scaleX(0.773);">Msgs</span><div style="left:172px;top:76px;width:94px;height:1px;background:#f0f0f0"></div><div style="left:172px;top:452px;width:94px;height:1px;background:#f0f0f0"></div><svg style="left:172px;top:77px" width="94" height="375" viewBox="172 77 94 375"><line x1="186" y1="77" x2="186" y2="452" stroke="#b8b8b8" stroke-width="0.8" stroke-dasharray="1,0.6"/><rect x="184.3" y="79.70" width="3.6" height="5" rx="0.8" fill="#e8ecf4" stroke="#c0c4cc" stroke-width="0.4"/><line x1="185.2" y1="82.30" x2="187.0" y2="82.30" stroke="#303030" stroke-width="0.6"/><path d="M192.00,78.70 L194.70,82.30 L192.00,85.90 L189.30,82.30Z" fill="#1a9ae0"/><path d="M192.00,78.70 L194.70,82.30 L192.00,82.80 L189.30,82.30Z" fill="#60d0ff"/><text x="195.90" y="84.40" font-size="6.4" fill="#dcdcdc" font-family="Liberation Sans" textLength="14.57" lengthAdjust="spacingAndGlyphs">wr_data</text><text x="230.8" y="84.40" font-size="6.4" fill="#dcdcdc" font-family="Liberation Sans" textLength="2.21" lengthAdjust="spacingAndGlyphs">0</text><line x1="186" y1="90.70" x2="189" y2="90.70" stroke="#c0c0c0" stroke-width="0.6"/><path d="M192.00,87.10 L194.70,90.70 L192.00,94.30 L189.30,90.70Z" fill="#1a9ae0"/><path d="M192.00,87.10 L194.70,90.70 L192.00,91.20 L189.30,90.70Z" fill="#60d0ff"/><text x="195.90" y="92.80" font-size="6.4" fill="#dcdcdc" font-family="Liberation Sans" textLength="11.84" lengthAdjust="spacingAndGlyphs">rd_req</text><text x="230.8" y="92.80" font-size="6.4" fill="#dcdcdc" font-family="Liberation Sans" textLength="2.21" lengthAdjust="spacingAndGlyphs">0</text><rect x="184.3" y="96.50" width="3.6" height="5" rx="0.8" fill="#e8ecf4" stroke="#c0c4cc" stroke-width="0.4"/><line x1="185.2" y1="99.10" x2="187.0" y2="99.10" stroke="#303030" stroke-width="0.6"/><path d="M192.00,95.50 L194.70,99.10 L192.00,102.70 L189.30,99.10Z" fill="#1a9ae0"/><path d="M192.00,95.50 L194.70,99.10 L192.00,99.60 L189.30,99.10Z" fill="#60d0ff"/><text x="195.90" y="101.20" font-size="6.4" fill="#dcdcdc" font-family="Liberation Sans" textLength="13.89" lengthAdjust="spacingAndGlyphs">rd_data</text><text x="230.8" y="101.20" font-size="6.4" fill="#dcdcdc" font-family="Liberation Sans" textLength="2.21" lengthAdjust="spacingAndGlyphs">0</text><line x1="186" y1="107.50" x2="189" y2="107.50" stroke="#c0c0c0" stroke-width="0.6"/><path d="M192.00,103.90 L194.70,107.50 L192.00,111.10 L189.30,107.50Z" fill="#1a9ae0"/><path d="M192.00,103.90 L194.70,107.50 L192.00,108.00 L189.30,107.50Z" fill="#60d0ff"/><text x="195.90" y="109.60" font-size="6.4" fill="#dcdcdc" font-family="Liberation Sans" textLength="17.07" lengthAdjust="spacingAndGlyphs">rd_empty</text><text x="230.8" y="109.60" font-size="6.4" fill="#dcdcdc" font-family="Liberation Sans" textLength="2.21" lengthAdjust="spacingAndGlyphs">1</text><line x1="186" y1="115.90" x2="189" y2="115.90" stroke="#c0c0c0" stroke-width="0.6"/><path d="M192.00,112.30 L194.70,115.90 L192.00,119.50 L189.30,115.90Z" fill="#1a9ae0"/><path d="M192.00,112.30 L194.70,115.90 L192.00,116.40 L189.30,115.90Z" fill="#60d0ff"/><text x="195.90" y="118.00" font-size="6.4" fill="#dcdcdc" font-family="Liberation Sans" textLength="11.84" lengthAdjust="spacingAndGlyphs">wr_full</text><text x="230.8" y="118.00" font-size="6.4" fill="#dcdcdc" font-family="Liberation Sans" textLength="2.21" lengthAdjust="spacingAndGlyphs">0</text><line x1="186" y1="124.30" x2="189" y2="124.30" stroke="#c0c0c0" stroke-width="0.6"/><path d="M192.00,120.70 L194.70,124.30 L192.00,127.90 L189.30,124.30Z" fill="#1a9ae0"/><path d="M192.00,120.70 L194.70,124.30 L192.00,124.80 L189.30,124.30Z" fill="#60d0ff"/><text x="195.90" y="126.40" font-size="6.4" fill="#dcdcdc" font-family="Liberation Sans" textLength="4.55" lengthAdjust="spacingAndGlyphs">rst</text><text x="230.8" y="126.40" font-size="6.4" fill="#dcdcdc" font-family="Liberation Sans" textLength="2.21" lengthAdjust="spacingAndGlyphs">0</text><rect x="178.5" y="130.10" width="3.6" height="5" rx="0.8" fill="#e8ecf4" stroke="#c0c4cc" stroke-width="0.4"/><line x1="179.4" y1="132.70" x2="181.2" y2="132.70" stroke="#303030" stroke-width="0.6"/><path d="M185.60,129.10 L188.20,132.70 L185.60,136.30 L183.00,132.70Z" fill="#e01818"/><path d="M185.60,129.10 L188.20,132.70 L185.60,132.70Z" fill="#ff6060"/><text x="189.60" y="134.80" font-size="6.4" fill="#dcdcdc" font-family="Liberation Sans" textLength="16.39" lengthAdjust="spacingAndGlyphs">pll_inster</text><line x1="186" y1="141.10" x2="189" y2="141.10" stroke="#c0c0c0" stroke-width="0.6"/><path d="M192.00,137.50 L194.70,141.10 L192.00,144.70 L189.30,141.10Z" fill="#1a9ae0"/><path d="M192.00,137.50 L194.70,141.10 L192.00,141.60 L189.30,141.10Z" fill="#60d0ff"/><path d="M189.30,142.30 L192.50,142.30 L191.50,144.90 L189.10,144.50Z" fill="#30c030"/><text x="195.90" y="143.20" font-size="6.4" fill="#dcdcdc" font-family="Liberation Sans" textLength="11.38" lengthAdjust="spacingAndGlyphs">areset</text><text x="230.8" y="143.20" font-size="6.4" fill="#dcdcdc" font-family="Liberation Sans" textLength="2.21" lengthAdjust="spacingAndGlyphs">0</text><line x1="186" y1="149.50" x2="189" y2="149.50" stroke="#c0c0c0" stroke-width="0.6"/><path d="M192.00,145.90 L194.70,149.50 L192.00,153.10 L189.30,149.50Z" fill="#1a9ae0"/><path d="M192.00,145.90 L194.70,149.50 L192.00,150.00 L189.30,149.50Z" fill="#60d0ff"/><path d="M189.30,150.70 L192.50,150.70 L191.50,153.30 L189.10,152.90Z" fill="#30c030"/><text x="195.90" y="151.60" font-size="6.4" fill="#dcdcdc" font-family="Liberation Sans" textLength="10.47" lengthAdjust="spacingAndGlyphs">inclk0</text><text x="230.8" y="151.60" font-size="6.4" fill="#dcdcdc" font-family="Liberation Sans" textLength="2.21" lengthAdjust="spacingAndGlyphs">1</text><line x1="186" y1="157.90" x2="189" y2="157.90" stroke="#c0c0c0" stroke-width="0.6"/><path d="M192.00,154.30 L194.70,157.90 L192.00,161.50 L189.30,157.90Z" fill="#1a9ae0"/><path d="M192.00,154.30 L194.70,157.90 L192.00,158.40 L189.30,157.90Z" fill="#60d0ff"/><path d="M189.30,159.10 L192.50,159.10 L191.50,161.70 L189.10,161.30Z" fill="#30c030"/><text x="195.90" y="160.00" font-size="6.4" fill="#dcdcdc" font-family="Liberation Sans" textLength="4.33" lengthAdjust="spacingAndGlyphs">c0</text><text x="230.8" y="160.00" font-size="6.4" fill="#dcdcdc" font-family="Liberation Sans" textLength="2.21" lengthAdjust="spacingAndGlyphs">1</text><line x1="186" y1="166.30" x2="189" y2="166.30" stroke="#c0c0c0" stroke-width="0.6"/><path d="M192.00,162.70 L194.70,166.30 L192.00,169.90 L189.30,166.30Z" fill="#1a9ae0"/><path d="M192.00,162.70 L194.70,166.30 L192.00,166.80 L189.30,166.30Z" fill="#60d0ff"/><path d="M189.30,167.50 L192.50,167.50 L191.50,170.10 L189.10,169.70Z" fill="#30c030"/><text x="195.90" y="168.40" font-size="6.4" fill="#dcdcdc" font-family="Liberation Sans" textLength="11.84" lengthAdjust="spacingAndGlyphs">locked</text><text x="230.8" y="168.40" font-size="6.4" fill="#dcdcdc" font-family="Liberation Sans" textLength="2.21" lengthAdjust="spacingAndGlyphs">1</text><line x1="186" y1="174.70" x2="189" y2="174.70" stroke="#c0c0c0" stroke-width="0.6"/><path d="M192.00,171.10 L194.70,174.70 L192.00,178.30 L189.30,174.70Z" fill="#1a9ae0"/><path d="M192.00,171.10 L194.70,174.70 L192.00,175.20 L189.30,174.70Z" fill="#60d0ff"/><text x="195.90" y="176.80" font-size="6.4" fill="#dcdcdc" font-family="Liberation Sans" textLength="18.67" lengthAdjust="spacingAndGlyphs">sub_wire0</text><text x="230.8" y="176.80" font-size="6.4" fill="#dcdcdc" font-family="Liberation Sans" textLength="2.21" lengthAdjust="spacingAndGlyphs">1</text><rect x="184.3" y="180.50" width="3.6" height="5" rx="0.8" fill="#e8ecf4" stroke="#c0c4cc" stroke-width="0.4"/><line x1="185.2" y1="183.10" x2="187.0" y2="183.10" stroke="#303030" stroke-width="0.6"/><path d="M192.00,179.50 L194.70,183.10 L192.00,186.70 L189.30,183.10Z" fill="#1a9ae0"/><path d="M192.00,179.50 L194.70,183.10 L192.00,183.60 L189.30,183.10Z" fill="#60d0ff"/><text x="195.90" y="185.20" font-size="6.4" fill="#dcdcdc" font-family="Liberation Sans" textLength="18.67" lengthAdjust="spacingAndGlyphs">sub_wire1</text><text x="230.8" y="185.20" font-size="6.4" fill="#dcdcdc" font-family="Liberation Sans" textLength="2.21" lengthAdjust="spacingAndGlyphs">1</text><rect x="184.3" y="188.90" width="3.6" height="5" rx="0.8" fill="#e8ecf4" stroke="#c0c4cc" stroke-width="0.4"/><line x1="185.2" y1="191.50" x2="187.0" y2="191.50" stroke="#303030" stroke-width="0.6"/><path d="M192.00,187.90 L194.70,191.50 L192.00,195.10 L189.30,191.50Z" fill="#1a9ae0"/><path d="M192.00,187.90 L194.70,191.50 L192.00,192.00 L189.30,191.50Z" fill="#60d0ff"/><text x="195.90" y="193.60" font-size="6.4" fill="#dcdcdc" font-family="Liberation Sans" textLength="18.67" lengthAdjust="spacingAndGlyphs">sub_wire5</text><text x="230.8" y="193.60" font-size="6.4" fill="#dcdcdc" font-family="Liberation Sans" textLength="2.21" lengthAdjust="spacingAndGlyphs">0</text><rect x="184.3" y="197.30" width="3.6" height="5" rx="0.8" fill="#e8ecf4" stroke="#c0c4cc" stroke-width="0.4"/><line x1="185.2" y1="199.90" x2="187.0" y2="199.90" stroke="#303030" stroke-width="0.6"/><path d="M192.00,196.30 L194.70,199.90 L192.00,203.50 L189.30,199.90Z" fill="#1a9ae0"/><path d="M192.00,196.30 L194.70,199.90 L192.00,200.40 L189.30,199.90Z" fill="#60d0ff"/><text x="195.90" y="202.00" font-size="6.4" fill="#dcdcdc" font-family="Liberation Sans" textLength="18.67" lengthAdjust="spacingAndGlyphs">sub_wire2</text><text x="230.8" y="202.00" font-size="6.4" fill="#dcdcdc" font-family="Liberation Sans" textLength="2.21" lengthAdjust="spacingAndGlyphs">1</text><line x1="186" y1="208.30" x2="189" y2="208.30" stroke="#c0c0c0" stroke-width="0.6"/><path d="M192.00,204.70 L194.70,208.30 L192.00,211.90 L189.30,208.30Z" fill="#1a9ae0"/><path d="M192.00,204.70 L194.70,208.30 L192.00,208.80 L189.30,208.30Z" fill="#60d0ff"/><text x="195.90" y="210.40" font-size="6.4" fill="#dcdcdc" font-family="Liberation Sans" textLength="18.67" lengthAdjust="spacingAndGlyphs">sub_wire3</text><text x="230.8" y="210.40" font-size="6.4" fill="#dcdcdc" font-family="Liberation Sans" textLength="2.21" lengthAdjust="spacingAndGlyphs">1</text><rect x="184.3" y="214.10" width="3.6" height="5" rx="0.8" fill="#e8ecf4" stroke="#c0c4cc" stroke-width="0.4"/><line x1="185.2" y1="216.70" x2="187.0" y2="216.70" stroke="#303030" stroke-width="0.6"/><path d="M192.00,213.10 L194.70,216.70 L192.00,220.30 L189.30,216.70Z" fill="#1a9ae0"/><path d="M192.00,213.10 L194.70,216.70 L192.00,217.20 L189.30,216.70Z" fill="#60d0ff"/><text x="195.90" y="218.80" font-size="6.4" fill="#dcdcdc" font-family="Liberation Sans" textLength="18.67" lengthAdjust="spacingAndGlyphs">sub_wire4</text><text x="230.8" y="218.80" font-size="6.4" fill="#dcdcdc" font-family="Liberation Sans" textLength="2.21" lengthAdjust="spacingAndGlyphs">1</text><rect x="178.5" y="222.50" width="3.6" height="5" rx="0.8" fill="#e8ecf4" stroke="#c0c4cc" stroke-width="0.4"/><line x1="179.4" y1="225.10" x2="181.2" y2="225.10" stroke="#303030" stroke-width="0.6"/><path d="M185.60,221.50 L188.20,225.10 L185.60,228.70 L183.00,225.10Z" fill="#e01818"/><path d="M185.60,221.50 L188.20,225.10 L185.60,225.10Z" fill="#ff6060"/><text x="189.60" y="227.20" font-size="6.4" fill="#dcdcdc" font-family="Liberation Sans" textLength="24.13" lengthAdjust="spacingAndGlyphs">pulses_inster</text><line x1="186" y1="233.50" x2="189" y2="233.50" stroke="#c0c0c0" stroke-width="0.6"/><path d="M192.00,229.90 L194.70,233.50 L192.00,237.10 L189.30,233.50Z" fill="#1a9ae0"/><path d="M192.00,229.90 L194.70,233.50 L192.00,234.00 L189.30,233.50Z" fill="#60d0ff"/><path d="M189.30,234.70 L192.50,234.70 L191.50,237.30 L189.10,236.90Z" fill="#30c030"/><text x="195.90" y="235.60" font-size="6.4" fill="#dcdcdc" font-family="Liberation Sans" textLength="5.01" lengthAdjust="spacingAndGlyphs">clk</text><text x="230.8" y="235.60" font-size="6.4" fill="#dcdcdc" font-family="Liberation Sans" textLength="2.21" lengthAdjust="spacingAndGlyphs">1</text><line x1="186" y1="241.90" x2="189" y2="241.90" stroke="#c0c0c0" stroke-width="0.6"/><path d="M192.00,238.30 L194.70,241.90 L192.00,245.50 L189.30,241.90Z" fill="#1a9ae0"/><path d="M192.00,238.30 L194.70,241.90 L192.00,242.40 L189.30,241.90Z" fill="#60d0ff"/><path d="M189.30,243.10 L192.50,243.10 L191.50,245.70 L189.10,245.30Z" fill="#30c030"/><text x="195.90" y="244.00" font-size="6.4" fill="#dcdcdc" font-family="Liberation Sans" textLength="9.11" lengthAdjust="spacingAndGlyphs">reset</text><text x="230.8" y="244.00" font-size="6.4" fill="#dcdcdc" font-family="Liberation Sans" textLength="2.21" lengthAdjust="spacingAndGlyphs">1</text><line x1="186" y1="250.30" x2="189" y2="250.30" stroke="#c0c0c0" stroke-width="0.6"/><path d="M192.00,246.70 L194.70,250.30 L192.00,253.90 L189.30,250.30Z" fill="#1a9ae0"/><path d="M192.00,246.70 L194.70,250.30 L192.00,250.80 L189.30,250.30Z" fill="#60d0ff"/><path d="M189.30,251.50 L192.50,251.50 L191.50,254.10 L189.10,253.70Z" fill="#30c030"/><text x="195.90" y="252.40" font-size="6.4" fill="#dcdcdc" font-family="Liberation Sans" textLength="15.03" lengthAdjust="spacingAndGlyphs">i_pulses</text><text x="230.8" y="252.40" font-size="6.4" fill="#dcdcdc" font-family="Liberation Sans" textLength="2.21" lengthAdjust="spacingAndGlyphs">1</text><line x1="186" y1="258.70" x2="189" y2="258.70" stroke="#c0c0c0" stroke-width="0.6"/><path d="M192.00,255.10 L194.70,258.70 L192.00,262.30 L189.30,258.70Z" fill="#1a9ae0"/><path d="M192.00,255.10 L194.70,258.70 L192.00,259.20 L189.30,258.70Z" fill="#60d0ff"/><path d="M189.30,259.90 L192.50,259.90 L191.50,262.50 L189.10,262.10Z" fill="#30c030"/><text x="195.90" y="260.80" font-size="6.4" fill="#dcdcdc" font-family="Liberation Sans" textLength="12.52" lengthAdjust="spacingAndGlyphs">wr_req</text><text x="230.8" y="260.80" font-size="6.4" fill="#dcdcdc" font-family="Liberation Sans" textLength="2.21" lengthAdjust="spacingAndGlyphs">0</text><line x1="186" y1="267.10" x2="189" y2="267.10" stroke="#c0c0c0" stroke-width="0.6"/><path d="M192.00,263.50 L194.70,267.10 L192.00,270.70 L189.30,267.10Z" fill="#1a9ae0"/><path d="M192.00,263.50 L194.70,267.10 L192.00,267.60 L189.30,267.10Z" fill="#60d0ff"/><path d="M189.30,268.30 L192.50,268.30 L191.50,270.90 L189.10,270.50Z" fill="#30c030"/><text x="195.90" y="269.20" font-size="6.4" fill="#dcdcdc" font-family="Liberation Sans" textLength="5.47" lengthAdjust="spacingAndGlyphs">led</text><text x="230.8" y="269.20" font-size="6.4" fill="#dcdcdc" font-family="Liberation Sans" textLength="2.21" lengthAdjust="spacingAndGlyphs">0</text><rect x="184.3" y="272.90" width="3.6" height="5" rx="0.8" fill="#e8ecf4" stroke="#c0c4cc" stroke-width="0.4"/><line x1="185.2" y1="275.50" x2="187.0" y2="275.50" stroke="#303030" stroke-width="0.6"/><path d="M192.00,271.90 L194.70,275.50 L192.00,279.10 L189.30,275.50Z" fill="#1a9ae0"/><path d="M192.00,271.90 L194.70,275.50 L192.00,276.00 L189.30,275.50Z" fill="#60d0ff"/><path d="M189.30,276.70 L192.50,276.70 L191.50,279.30 L189.10,278.90Z" fill="#30c030"/><text x="195.90" y="277.60" font-size="6.4" fill="#dcdcdc" font-family="Liberation Sans" textLength="14.57" lengthAdjust="spacingAndGlyphs">wr_data</text><text x="230.8" y="277.60" font-size="6.4" fill="#dcdcdc" font-family="Liberation Sans" textLength="2.21" lengthAdjust="spacingAndGlyphs">0</text><line x1="186" y1="283.90" x2="189" y2="283.90" stroke="#c0c0c0" stroke-width="0.6"/><path d="M192.00,280.30 L194.70,283.90 L192.00,287.50 L189.30,283.90Z" fill="#1a9ae0"/><path d="M192.00,280.30 L194.70,283.90 L192.00,284.40 L189.30,283.90Z" fill="#60d0ff"/><text x="195.90" y="286.00" font-size="6.4" fill="#dcdcdc" font-family="Liberation Sans" textLength="16.85" lengthAdjust="spacingAndGlyphs">count_en</text><text x="230.8" y="286.00" font-size="6.4" fill="#dcdcdc" font-family="Liberation Sans" textLength="2.21" lengthAdjust="spacingAndGlyphs">1</text><line x1="186" y1="292.30" x2="189" y2="292.30" stroke="#c0c0c0" stroke-width="0.6"/><path d="M192.00,288.70 L194.70,292.30 L192.00,295.90 L189.30,292.30Z" fill="#1a9ae0"/><path d="M192.00,288.70 L194.70,292.30 L192.00,292.80 L189.30,292.30Z" fill="#60d0ff"/><text x="195.90" y="294.40" font-size="6.4" fill="#dcdcdc" font-family="Liberation Sans" textLength="16.62" lengthAdjust="spacingAndGlyphs">clr_count</text><text x="230.8" y="294.40" font-size="6.4" fill="#dcdcdc" font-family="Liberation Sans" textLength="2.21" lengthAdjust="spacingAndGlyphs">0</text><rect x="184.3" y="298.10" width="3.6" height="5" rx="0.8" fill="#e8ecf4" stroke="#c0c4cc" stroke-width="0.4"/><line x1="185.2" y1="300.70" x2="187.0" y2="300.70" stroke="#303030" stroke-width="0.6"/><path d="M192.00,297.10 L194.70,300.70 L192.00,304.30 L189.30,300.70Z" fill="#1a9ae0"/><path d="M192.00,297.10 L194.70,300.70 L192.00,301.20 L189.30,300.70Z" fill="#60d0ff"/><text x="195.90" y="302.80" font-size="6.4" fill="#dcdcdc" font-family="Liberation Sans" textLength="10.02" lengthAdjust="spacingAndGlyphs">count</text><text x="230.8" y="302.80" font-size="6.4" fill="#dcdcdc" font-family="Liberation Sans" textLength="6.62" lengthAdjust="spacingAndGlyphs">960</text><line x1="186" y1="309.10" x2="189" y2="309.10" stroke="#c0c0c0" stroke-width="0.6"/><path d="M192.00,305.50 L194.70,309.10 L192.00,312.70 L189.30,309.10Z" fill="#1a9ae0"/><path d="M192.00,305.50 L194.70,309.10 L192.00,309.60 L189.30,309.10Z" fill="#60d0ff"/><text x="195.90" y="311.20" font-size="6.4" fill="#dcdcdc" font-family="Liberation Sans" textLength="23.46" lengthAdjust="spacingAndGlyphs">count10s_en</text><text x="230.8" y="311.20" font-size="6.4" fill="#dcdcdc" font-family="Liberation Sans" textLength="2.21" lengthAdjust="spacingAndGlyphs">0</text><line x1="186" y1="317.50" x2="189" y2="317.50" stroke="#c0c0c0" stroke-width="0.6"/><path d="M192.00,313.90 L194.70,317.50 L192.00,321.10 L189.30,317.50Z" fill="#1a9ae0"/><path d="M192.00,313.90 L194.70,317.50 L192.00,318.00 L189.30,317.50Z" fill="#60d0ff"/><text x="195.90" y="319.60" font-size="6.4" fill="#dcdcdc" font-family="Liberation Sans" textLength="27.78" lengthAdjust="spacingAndGlyphs">count10s_clear</text><text x="230.8" y="319.60" font-size="6.4" fill="#dcdcdc" font-family="Liberation Sans" textLength="2.21" lengthAdjust="spacingAndGlyphs">0</text><rect x="176" y="321.40" width="53" height="8.6" fill="#ffffff"/><rect x="230" y="321.40" width="35" height="8.6" fill="#ffffff"/><rect x="184.3" y="323.30" width="3.6" height="5" rx="0.8" fill="#e8ecf4" stroke="#c0c4cc" stroke-width="0.4"/><line x1="185.2" y1="325.90" x2="187.0" y2="325.90" stroke="#303030" stroke-width="0.6"/><path d="M192.00,322.30 L194.70,325.90 L192.00,329.50 L189.30,325.90Z" fill="#1a9ae0"/><path d="M192.00,322.30 L194.70,325.90 L192.00,326.40 L189.30,325.90Z" fill="#60d0ff"/><text x="195.90" y="328.00" font-size="6.4" fill="#404040" font-family="Liberation Sans" textLength="16.62" lengthAdjust="spacingAndGlyphs">count10s</text><text x="230.8" y="328.00" font-size="6.4" fill="#404040" font-family="Liberation Sans" textLength="2.21" lengthAdjust="spacingAndGlyphs">0</text><line x1="186" y1="334.30" x2="189" y2="334.30" stroke="#c0c0c0" stroke-width="0.6"/><path d="M192.00,330.70 L194.70,334.30 L192.00,337.90 L189.30,334.30Z" fill="#1a9ae0"/><path d="M192.00,330.70 L194.70,334.30 L192.00,334.80 L189.30,334.30Z" fill="#60d0ff"/><text x="195.90" y="336.40" font-size="6.4" fill="#dcdcdc" font-family="Liberation Sans" textLength="24.14" lengthAdjust="spacingAndGlyphs">level_change</text><text x="230.8" y="336.40" font-size="6.4" fill="#dcdcdc" font-family="Liberation Sans" textLength="2.21" lengthAdjust="spacingAndGlyphs">0</text><rect x="184.3" y="340.10" width="3.6" height="5" rx="0.8" fill="#e8ecf4" stroke="#c0c4cc" stroke-width="0.4"/><line x1="185.2" y1="342.70" x2="187.0" y2="342.70" stroke="#303030" stroke-width="0.6"/><path d="M192.00,339.10 L194.70,342.70 L192.00,346.30 L189.30,342.70Z" fill="#1a9ae0"/><path d="M192.00,339.10 L194.70,342.70 L192.00,343.20 L189.30,342.70Z" fill="#60d0ff"/><text x="195.90" y="344.80" font-size="6.4" fill="#dcdcdc" font-family="Liberation Sans" textLength="8.88" lengthAdjust="spacingAndGlyphs">state</text><text x="230.8" y="344.80" font-size="6.4" fill="#dcdcdc" font-family="Liberation Sans" textLength="2.21" lengthAdjust="spacingAndGlyphs">2</text><rect x="178.5" y="348.50" width="3.6" height="5" rx="0.8" fill="#e8ecf4" stroke="#c0c4cc" stroke-width="0.4"/><line x1="179.4" y1="351.10" x2="181.2" y2="351.10" stroke="#303030" stroke-width="0.6"/><path d="M185.60,347.50 L188.20,351.10 L185.60,354.70 L183.00,351.10Z" fill="#e01818"/><path d="M185.60,347.50 L188.20,351.10 L185.60,351.10Z" fill="#ff6060"/><text x="189.60" y="353.20" font-size="6.4" fill="#dcdcdc" font-family="Liberation Sans" textLength="17.76" lengthAdjust="spacingAndGlyphs">inster_fifo</text><line x1="186" y1="359.50" x2="189" y2="359.50" stroke="#c0c0c0" stroke-width="0.6"/><path d="M192.00,355.90 L194.70,359.50 L192.00,363.10 L189.30,359.50Z" fill="#1a9ae0"/><path d="M192.00,355.90 L194.70,359.50 L192.00,360.00 L189.30,359.50Z" fill="#60d0ff"/><path d="M189.30,360.70 L192.50,360.70 L191.50,363.30 L189.10,362.90Z" fill="#30c030"/><text x="195.90" y="361.60" font-size="6.4" fill="#dcdcdc" font-family="Liberation Sans" textLength="5.01" lengthAdjust="spacingAndGlyphs">clk</text><text x="230.8" y="361.60" font-size="6.4" fill="#dcdcdc" font-family="Liberation Sans" textLength="2.21" lengthAdjust="spacingAndGlyphs">1</text><line x1="186" y1="367.90" x2="189" y2="367.90" stroke="#c0c0c0" stroke-width="0.6"/><path d="M192.00,364.30 L194.70,367.90 L192.00,371.50 L189.30,367.90Z" fill="#1a9ae0"/><path d="M192.00,364.30 L194.70,367.90 L192.00,368.40 L189.30,367.90Z" fill="#60d0ff"/><path d="M189.30,369.10 L192.50,369.10 L191.50,371.70 L189.10,371.30Z" fill="#30c030"/><text x="195.90" y="370.00" font-size="6.4" fill="#dcdcdc" font-family="Liberation Sans" textLength="13.89" lengthAdjust="spacingAndGlyphs">fast_clk</text><text x="230.8" y="370.00" font-size="6.4" fill="#dcdcdc" font-family="Liberation Sans" textLength="2.21" lengthAdjust="spacingAndGlyphs">1</text><line x1="186" y1="376.30" x2="189" y2="376.30" stroke="#c0c0c0" stroke-width="0.6"/><path d="M192.00,372.70 L194.70,376.30 L192.00,379.90 L189.30,376.30Z" fill="#1a9ae0"/><path d="M192.00,372.70 L194.70,376.30 L192.00,376.80 L189.30,376.30Z" fill="#60d0ff"/><path d="M189.30,377.50 L192.50,377.50 L191.50,380.10 L189.10,379.70Z" fill="#30c030"/><text x="195.90" y="378.40" font-size="6.4" fill="#dcdcdc" font-family="Liberation Sans" textLength="9.11" lengthAdjust="spacingAndGlyphs">reset</text><text x="230.8" y="378.40" font-size="6.4" fill="#dcdcdc" font-family="Liberation Sans" textLength="2.21" lengthAdjust="spacingAndGlyphs">1</text><line x1="186" y1="384.70" x2="189" y2="384.70" stroke="#c0c0c0" stroke-width="0.6"/><path d="M192.00,381.10 L194.70,384.70 L192.00,388.30 L189.30,384.70Z" fill="#1a9ae0"/><path d="M192.00,381.10 L194.70,384.70 L192.00,385.20 L189.30,384.70Z" fill="#60d0ff"/><path d="M189.30,385.90 L192.50,385.90 L191.50,388.50 L189.10,388.10Z" fill="#30c030"/><text x="195.90" y="386.80" font-size="6.4" fill="#dcdcdc" font-family="Liberation Sans" textLength="12.52" lengthAdjust="spacingAndGlyphs">wr_req</text><text x="230.8" y="386.80" font-size="6.4" fill="#dcdcdc" font-family="Liberation Sans" textLength="2.21" lengthAdjust="spacingAndGlyphs">0</text><rect x="184.3" y="390.50" width="3.6" height="5" rx="0.8" fill="#e8ecf4" stroke="#c0c4cc" stroke-width="0.4"/><line x1="185.2" y1="393.10" x2="187.0" y2="393.10" stroke="#303030" stroke-width="0.6"/><path d="M192.00,389.50 L194.70,393.10 L192.00,396.70 L189.30,393.10Z" fill="#1a9ae0"/><path d="M192.00,389.50 L194.70,393.10 L192.00,393.60 L189.30,393.10Z" fill="#60d0ff"/><path d="M189.30,394.30 L192.50,394.30 L191.50,396.90 L189.10,396.50Z" fill="#30c030"/><text x="195.90" y="395.20" font-size="6.4" fill="#dcdcdc" font-family="Liberation Sans" textLength="14.57" lengthAdjust="spacingAndGlyphs">wr_data</text><text x="230.8" y="395.20" font-size="6.4" fill="#dcdcdc" font-family="Liberation Sans" textLength="2.21" lengthAdjust="spacingAndGlyphs">0</text><line x1="186" y1="401.50" x2="189" y2="401.50" stroke="#c0c0c0" stroke-width="0.6"/><path d="M192.00,397.90 L194.70,401.50 L192.00,405.10 L189.30,401.50Z" fill="#1a9ae0"/><path d="M192.00,397.90 L194.70,401.50 L192.00,402.00 L189.30,401.50Z" fill="#60d0ff"/><path d="M189.30,402.70 L192.50,402.70 L191.50,405.30 L189.10,404.90Z" fill="#30c030"/><text x="195.90" y="403.60" font-size="6.4" fill="#dcdcdc" font-family="Liberation Sans" textLength="11.84" lengthAdjust="spacingAndGlyphs">rd_req</text><text x="230.8" y="403.60" font-size="6.4" fill="#dcdcdc" font-family="Liberation Sans" textLength="2.21" lengthAdjust="spacingAndGlyphs">0</text><line x1="186" y1="409.90" x2="189" y2="409.90" stroke="#c0c0c0" stroke-width="0.6"/><path d="M192.00,406.30 L194.70,409.90 L192.00,413.50 L189.30,409.90Z" fill="#1a9ae0"/><path d="M192.00,406.30 L194.70,409.90 L192.00,410.40 L189.30,409.90Z" fill="#60d0ff"/><path d="M189.30,411.10 L192.50,411.10 L191.50,413.70 L189.10,413.30Z" fill="#30c030"/><text x="195.90" y="412.00" font-size="6.4" fill="#dcdcdc" font-family="Liberation Sans" textLength="5.47" lengthAdjust="spacingAndGlyphs">led</text><text x="230.8" y="412.00" font-size="6.4" fill="#dcdcdc" font-family="Liberation Sans" textLength="2.21" lengthAdjust="spacingAndGlyphs">1</text><line x1="186" y1="418.30" x2="189" y2="418.30" stroke="#c0c0c0" stroke-width="0.6"/><path d="M192.00,414.70 L194.70,418.30 L192.00,421.90 L189.30,418.30Z" fill="#1a9ae0"/><path d="M192.00,414.70 L194.70,418.30 L192.00,418.80 L189.30,418.30Z" fill="#60d0ff"/><path d="M189.30,419.50 L192.50,419.50 L191.50,422.10 L189.10,421.70Z" fill="#30c030"/><text x="195.90" y="420.40" font-size="6.4" fill="#dcdcdc" font-family="Liberation Sans" textLength="11.84" lengthAdjust="spacingAndGlyphs">wr_full</text><text x="230.8" y="420.40" font-size="6.4" fill="#dcdcdc" font-family="Liberation Sans" textLength="2.21" lengthAdjust="spacingAndGlyphs">0</text><line x1="186" y1="426.70" x2="189" y2="426.70" stroke="#c0c0c0" stroke-width="0.6"/><path d="M192.00,423.10 L194.70,426.70 L192.00,430.30 L189.30,426.70Z" fill="#1a9ae0"/><path d="M192.00,423.10 L194.70,426.70 L192.00,427.20 L189.30,426.70Z" fill="#60d0ff"/><path d="M189.30,427.90 L192.50,427.90 L191.50,430.50 L189.10,430.10Z" fill="#30c030"/><text x="195.90" y="428.80" font-size="6.4" fill="#dcdcdc" font-family="Liberation Sans" textLength="17.07" lengthAdjust="spacingAndGlyphs">rd_empty</text><text x="230.8" y="428.80" font-size="6.4" fill="#dcdcdc" font-family="Liberation Sans" textLength="2.21" lengthAdjust="spacingAndGlyphs">1</text><rect x="184.3" y="432.50" width="3.6" height="5" rx="0.8" fill="#e8ecf4" stroke="#c0c4cc" stroke-width="0.4"/><line x1="185.2" y1="435.10" x2="187.0" y2="435.10" stroke="#303030" stroke-width="0.6"/><path d="M192.00,431.50 L194.70,435.10 L192.00,438.70 L189.30,435.10Z" fill="#1a9ae0"/><path d="M192.00,431.50 L194.70,435.10 L192.00,435.60 L189.30,435.10Z" fill="#60d0ff"/><path d="M189.30,436.30 L192.50,436.30 L191.50,438.90 L189.10,438.50Z" fill="#30c030"/><text x="195.90" y="437.20" font-size="6.4" fill="#dcdcdc" font-family="Liberation Sans" textLength="13.89" lengthAdjust="spacingAndGlyphs">rd_data</text><text x="230.8" y="437.20" font-size="6.4" fill="#dcdcdc" font-family="Liberation Sans" textLength="2.21" lengthAdjust="spacingAndGlyphs">0</text><rect x="184.3" y="440.90" width="3.6" height="5" rx="0.8" fill="#e8ecf4" stroke="#c0c4cc" stroke-width="0.4"/><line x1="185.2" y1="443.50" x2="187.0" y2="443.50" stroke="#303030" stroke-width="0.6"/><path d="M192.00,439.90 L194.70,443.50 L192.00,447.10 L189.30,443.50Z" fill="#1a9ae0"/><path d="M192.00,439.90 L194.70,443.50 L192.00,444.00 L189.30,443.50Z" fill="#60d0ff"/><text x="195.90" y="445.60" font-size="6.4" fill="#dcdcdc" font-family="Liberation Sans" textLength="19.12" lengthAdjust="spacingAndGlyphs">write_addr</text><text x="230.8" y="445.60" font-size="6.4" fill="#dcdcdc" font-family="Liberation Sans" textLength="2.21" lengthAdjust="spacingAndGlyphs">0</text><rect x="184.3" y="449.30" width="3.6" height="5" rx="0.8" fill="#e8ecf4" stroke="#c0c4cc" stroke-width="0.4"/><line x1="185.2" y1="451.90" x2="187.0" y2="451.90" stroke="#303030" stroke-width="0.6"/><path d="M192.00,448.30 L194.70,451.90 L192.00,455.50 L189.30,451.90Z" fill="#1a9ae0"/><path d="M192.00,448.30 L194.70,451.90 L192.00,452.40 L189.30,451.90Z" fill="#60d0ff"/><text x="195.90" y="454.00" font-size="6.4" fill="#dcdcdc" font-family="Liberation Sans" textLength="18.67" lengthAdjust="spacingAndGlyphs">read_addr</text><text x="230.8" y="454.00" font-size="6.4" fill="#dcdcdc" font-family="Liberation Sans" textLength="2.21" lengthAdjust="spacingAndGlyphs">0</text></svg><div style="left:173px;top:464px;width:93px;height:1px;background:#a0a0a0"></div><svg style="left:175px;top:455px" width="20" height="18" viewBox="0 0 20 18"><rect x="0.5" y="1.5" width="3" height="4" fill="#8090a0"/><rect x="4.5" y="1" width="4" height="5" fill="#5080d0"/><circle cx="11" cy="3.5" r="2.2" fill="#40c040"/><rect x="0.5" y="12" width="3.5" height="4" fill="#e8b020"/><path d="M5,16 L8,11" stroke="#4060c0" stroke-width="1.2"/><circle cx="10.5" cy="13.5" r="2.2" fill="#e03030"/></svg><span class="t" style="left:215px;top:456px;font-size:6.4px;line-height:6.4px;color:#d8d8d8;transform:scaleX(0.742);">Now</span><span class="t" style="left:237px;top:456px;font-size:6.4px;line-height:6.4px;color:#d8d8d8;transform:scaleX(0.676);">10000000 ps</span><div style="left:190px;top:464px;width:39px;height:8.3px;background:#ffffff"></div><div style="left:230px;top:464px;width:35px;height:8.3px;background:#ffffff"></div><span class="t" style="left:208px;top:465.5px;font-size:6.4px;line-height:6.4px;color:#303030;transform:scaleX(0.734);">Cursor 1</span><span class="t" style="left:243px;top:465.5px;font-size:6.4px;line-height:6.4px;color:#303030;transform:scaleX(0.628);">9962905 ps</span><svg style="left:8px;top:1px" width="6" height="8" viewBox="0 0 6 8"><rect x="0" y="0.5" width="5" height="1" fill="#2040e0"/><path d="M0.3,7.5 L0.3,2.5 L2.5,5 L4.7,2.5 L4.7,7.5" fill="none" stroke="#202020" stroke-width="1.3"/></svg><span class="t" style="left:15px;top:2px;font-size:6.8px;line-height:6.8px;color:#403a2c;transform:scaleX(0.642);">ModelSim ALTERA STARTER EDITION 10.1d</span><div style="left:297px;top:0px;width:300px;height:12px;background:linear-gradient(90deg,#f4ecc8,#f8f2d0 40%,#f6eecc)"></div><div style="left:296px;top:0px;width:1px;height:12px;background:#e0d8b8;opacity:0.6"></div><div style="left:230px;top:2px;width:30px;height:7px;background:#e8a078;filter:blur(1.5px);opacity:0.75"></div><div style="left:378px;top:2px;width:30px;height:7px;background:#eaa880;filter:blur(1.5px);opacity:0.7"></div><div style="left:300px;top:3px;width:6px;height:7px;background:linear-gradient(90deg,#d08040,#60a0d0);filter:blur(0.8px);opacity:0.8"></div><div style="left:318px;top:3px;width:4px;height:6px;background:#6070c0;filter:blur(0.8px);opacity:0.8"></div><div style="left:325px;top:2px;width:5px;height:5px;background:#90a8d0;filter:blur(0.8px);opacity:0.7"></div><div style="left:336px;top:3px;width:4px;height:6px;background:#7090d0;filter:blur(0.8px);opacity:0.7"></div><div style="left:347px;top:4px;width:3px;height:4px;background:#a0a0a0;filter:blur(0.8px);opacity:0.6"></div><span class="t" style="left:441px;top:2.5px;font-size:6.6px;line-height:6.6px;color:#6a6252;transform:scaleX(0.840);filter:blur(1.1px)">aaaaaaaa.docx - Microsoft Word</span><div style="left:540px;top:2px;width:40px;height:7px;background:#e8e0c8;filter:blur(2px);opacity:0.6"></div><div style="left:597px;top:0;width:35px;height:8px;border:1px solid #e0d8b8;border-top:0;border-radius:0 0 3px 3px;background:linear-gradient(#fbf6dc,#f3ecd0)"></div><div style="left:606px;top:0px;width:1px;height:8px;background:#e4dcc0"></div><div style="left:616px;top:0px;width:1px;height:8px;background:#e4dcc0"></div><svg style="left:597px;top:0" width="35" height="8"><rect x="3" y="3" width="4" height="2" fill="none" stroke="#a8a498" stroke-width="0.9"/><rect x="9.5" y="0.5" width="4" height="5" fill="none" stroke="#a8a498" stroke-width="0.9"/><path d="M22,1 L26,6 M26,1 L22,6" stroke="#b0aca0" stroke-width="0.9"/></svg><span class="t" style="left:10px;top:14px;font-size:6.6px;line-height:6.6px;color:#707690;transform:scaleX(0.611);">File</span><span class="t" style="left:22px;top:14px;font-size:6.6px;line-height:6.6px;color:#707690;transform:scaleX(0.703);">Edit</span><span class="t" style="left:34px;top:14px;font-size:6.6px;line-height:6.6px;color:#707690;transform:scaleX(0.705);">View</span><span class="t" style="left:49px;top:14px;font-size:6.6px;line-height:6.6px;color:#707690;transform:scaleX(0.744);">Compile</span><span class="t" style="left:71px;top:14px;font-size:6.6px;line-height:6.6px;color:#707690;transform:scaleX(0.701);">Simulate</span><span class="t" style="left:93px;top:14px;font-size:6.6px;line-height:6.6px;color:#707690;transform:scaleX(0.766);">Add</span><span class="t" style="left:106px;top:14px;font-size:6.6px;line-height:6.6px;color:#707690;transform:scaleX(0.722);">Wave</span><span class="t" style="left:123px;top:14px;font-size:6.6px;line-height:6.6px;color:#707690;transform:scaleX(0.714);">Tools</span><span class="t" style="left:139px;top:14px;font-size:6.6px;line-height:6.6px;color:#707690;transform:scaleX(0.707);">Layout</span><span class="t" style="left:157px;top:14px;font-size:6.6px;line-height:6.6px;color:#707690;transform:scaleX(0.757);">Bookmarks</span><span class="t" style="left:186px;top:14px;font-size:6.6px;line-height:6.6px;color:#707690;transform:scaleX(0.724);">Window</span><span class="t" style="left:207px;top:14px;font-size:6.6px;line-height:6.6px;color:#707690;transform:scaleX(0.737);">Help</span><div style="left:9px;top:23px;width:129px;height:16px;background:linear-gradient(#fbfbfb,#efefef);border:1px solid #d8d8d8;border-right-color:#c4c4c4;border-bottom-color:#c4c4c4;border-radius:2px"></div><div style="left:11px;top:26px;width:1px;height:10px;border-left:1px dotted #c0c0c0"></div><div style="left:139px;top:23px;width:35px;height:16px;background:linear-gradient(#fbfbfb,#efefef);border:1px solid #d8d8d8;border-right-color:#c4c4c4;border-bottom-color:#c4c4c4;border-radius:2px"></div><div style="left:141px;top:26px;width:1px;height:10px;border-left:1px dotted #c0c0c0"></div><div style="left:175px;top:23px;width:148px;height:16px;background:linear-gradient(#fbfbfb,#efefef);border:1px solid #d8d8d8;border-right-color:#c4c4c4;border-bottom-color:#c4c4c4;border-radius:2px"></div><div style="left:177px;top:26px;width:1px;height:10px;border-left:1px dotted #c0c0c0"></div><div style="left:324px;top:23px;width:56px;height:16px;background:linear-gradient(#fbfbfb,#efefef);border:1px solid #d8d8d8;border-right-color:#c4c4c4;border-bottom-color:#c4c4c4;border-radius:2px"></div><div style="left:326px;top:26px;width:1px;height:10px;border-left:1px dotted #c0c0c0"></div><div style="left:381px;top:23px;width:73px;height:16px;background:linear-gradient(#fbfbfb,#efefef);border:1px solid #d8d8d8;border-right-color:#c4c4c4;border-bottom-color:#c4c4c4;border-radius:2px"></div><div style="left:383px;top:26px;width:1px;height:10px;border-left:1px dotted #c0c0c0"></div><div style="left:455px;top:23px;width:117px;height:16px;background:linear-gradient(#fbfbfb,#efefef);border:1px solid #d8d8d8;border-right-color:#c4c4c4;border-bottom-color:#c4c4c4;border-radius:2px"></div><div style="left:457px;top:26px;width:1px;height:10px;border-left:1px dotted #c0c0c0"></div><div style="left:573px;top:23px;width:54px;height:16px;background:linear-gradient(#fbfbfb,#efefef);border:1px solid #d8d8d8;border-right-color:#c4c4c4;border-bottom-color:#c4c4c4;border-radius:2px"></div><div style="left:575px;top:26px;width:1px;height:10px;border-left:1px dotted #c0c0c0"></div><div style="left:9px;top:39px;width:59px;height:16px;background:linear-gradient(#fbfbfb,#efefef);border:1px solid #d8d8d8;border-right-color:#c4c4c4;border-bottom-color:#c4c4c4;border-radius:2px"></div><div style="left:11px;top:42px;width:1px;height:10px;border-left:1px dotted #c0c0c0"></div><div style="left:68px;top:39px;width:55px;height:16px;background:linear-gradient(#fbfbfb,#efefef);border:1px solid #d8d8d8;border-right-color:#c4c4c4;border-bottom-color:#c4c4c4;border-radius:2px"></div><div style="left:70px;top:42px;width:1px;height:10px;border-left:1px dotted #c0c0c0"></div><div style="left:123px;top:39px;width:68px;height:16px;background:linear-gradient(#fbfbfb,#efefef);border:1px solid #d8d8d8;border-right-color:#c4c4c4;border-bottom-color:#c4c4c4;border-radius:2px"></div><div style="left:125px;top:42px;width:1px;height:10px;border-left:1px dotted #c0c0c0"></div><div style="left:192px;top:39px;width:127px;height:16px;background:linear-gradient(#fbfbfb,#efefef);border:1px solid #d8d8d8;border-right-color:#c4c4c4;border-bottom-color:#c4c4c4;border-radius:2px"></div><div style="left:194px;top:42px;width:1px;height:10px;border-left:1px dotted #c0c0c0"></div><div style="left:320px;top:39px;width:43px;height:16px;background:linear-gradient(#fbfbfb,#efefef);border:1px solid #d8d8d8;border-right-color:#c4c4c4;border-bottom-color:#c4c4c4;border-radius:2px"></div><div style="left:322px;top:42px;width:1px;height:10px;border-left:1px dotted #c0c0c0"></div><div style="left:364px;top:39px;width:67px;height:16px;background:linear-gradient(#fbfbfb,#efefef);border:1px solid #d8d8d8;border-right-color:#c4c4c4;border-bottom-color:#c4c4c4;border-radius:2px"></div><div style="left:366px;top:42px;width:1px;height:10px;border-left:1px dotted #c0c0c0"></div><div style="left:433px;top:39px;width:36px;height:16px;background:linear-gradient(#fbfbfb,#efefef);border:1px solid #d8d8d8;border-right-color:#c4c4c4;border-bottom-color:#c4c4c4;border-radius:2px"></div><div style="left:435px;top:42px;width:1px;height:10px;border-left:1px dotted #c0c0c0"></div><div style="left:470px;top:39px;width:72px;height:16px;background:linear-gradient(#fbfbfb,#efefef);border:1px solid #d8d8d8;border-right-color:#c4c4c4;border-bottom-color:#c4c4c4;border-radius:2px"></div><div style="left:472px;top:42px;width:1px;height:10px;border-left:1px dotted #c0c0c0"></div><svg style="left:13px;top:26px" width="8" height="10" viewBox="0 0 8 10"><path d="M1,0.5 H5 L6.5,2 V9.5 H1Z" fill="#f4f4f4" stroke="#909090" stroke-width="0.6"/><path d="M2,4 H5.5 M2,5.5 H5.5 M2,7 H5.5" stroke="#a0a0a0" stroke-width="0.5"/></svg><div style="left:21px;top:31px;width:1px;height:1px;background:#404040"></div><svg style="left:24px;top:26px" width="8" height="10" viewBox="0 0 8 10"><path d="M0.5,4 L2.5,3 L6,3 L5.5,9 L0.5,9Z" fill="#c8b040"/><path d="M1,9 L2.5,5.5 L7,5.5 L5.5,9Z" fill="#90801c"/><path d="M4,1 L7,2" stroke="#70a040" stroke-width="0.8"/></svg><svg style="left:32px;top:26px" width="8" height="10" viewBox="0 0 8 10"><rect x="0.5" y="0.5" width="6" height="9" fill="#5a5428" stroke="#303010" stroke-width="0.5"/><rect x="1.5" y="1" width="4" height="3.5" fill="#f0f0e0"/></svg><svg style="left:40px;top:26px" width="8" height="10" viewBox="0 0 8 10"><path d="M1.5,5 A2.7,2.7 0 0 1 6.3,3.3 M6.5,5 A2.7,2.7 0 0 1 1.7,6.7" fill="none" stroke="#90d090" stroke-width="1.2"/></svg><svg style="left:48px;top:26px" width="8" height="10" viewBox="0 0 8 10"><rect x="0.5" y="2.5" width="7" height="5" rx="1.5" fill="#888"/><rect x="2" y="1" width="4" height="2.5" fill="#b0b0b0"/><rect x="2" y="6" width="4" height="3" fill="#c8b060"/></svg><div style="left:57px;top:27px;width:1px;height:9px;border-left:1px dotted #b8b8b8"></div><svg style="left:60px;top:26px" width="7" height="10" viewBox="0 0 7 10"><path d="M1.5,1 L3.5,6 L5.5,1" fill="none" stroke="#505050" stroke-width="0.7"/><circle cx="2.2" cy="8" r="1.3" fill="none" stroke="#3060e0" stroke-width="0.9"/><circle cx="4.8" cy="8" r="1.3" fill="none" stroke="#3060e0" stroke-width="0.9"/></svg><svg style="left:67px;top:26px" width="7" height="10" viewBox="0 0 7 10"><rect x="0.5" y="0.5" width="4" height="5.5" fill="#c8d0f0" stroke="#505080" stroke-width="0.5"/><rect x="2.5" y="3" width="4" height="6" fill="#8090d0" stroke="#404080" stroke-width="0.5"/></svg><svg style="left:75px;top:26px" width="7" height="10" viewBox="0 0 7 10"><rect x="0.5" y="1.5" width="6" height="8" fill="#80803a"/><rect x="2" y="0.5" width="3" height="2" fill="#404040"/><rect x="3" y="5" width="3.5" height="4" fill="#a0b0e0"/></svg><svg style="left:83px;top:26px" width="7" height="10" viewBox="0 0 7 10"><path d="M1.5,6 A2.5,2.5 0 1 1 6,6" fill="none" stroke="#b8b8b8" stroke-width="0.8"/><path d="M0.5,4 L1.7,6.3 L3,4" fill="none" stroke="#b8b8b8" stroke-width="0.8"/><path d="M1,9 H6" stroke="#d0d0d0" stroke-width="0.6"/></svg><svg style="left:91px;top:26px" width="7" height="10" viewBox="0 0 7 10"><path d="M1,6 A2.5,2.5 0 1 1 5.5,6" fill="none" stroke="#b8b8b8" stroke-width="0.8"/><path d="M4,4 L5.3,6.3 L6.5,4" fill="none" stroke="#b8b8b8" stroke-width="0.8"/><path d="M1,9 H6" stroke="#d0d0d0" stroke-width="0.6"/></svg><div style="left:100px;top:27px;width:1px;height:9px;border-left:1px dotted #b8b8b8"></div><svg style="left:103px;top:26px" width="6" height="10" viewBox="0 0 6 10"><ellipse cx="2.5" cy="5" rx="2.3" ry="3.5" fill="#70c870"/><ellipse cx="2.5" cy="5" rx="1" ry="1.8" fill="#d8f4d8"/></svg><div style="left:110px;top:31px;width:1px;height:1px;background:#404040"></div><svg style="left:113px;top:26px" width="6" height="10" viewBox="0 0 6 10"><path d="M0.5,9 L0.5,3 L2,1 L3,3 L4,1 L5.5,3 L5.5,9 L4,9 L3,6 L2,9Z" fill="#202020"/></svg><svg style="left:121px;top:26px" width="6" height="10" viewBox="0 0 6 10"><path d="M1.5,1 H5 M1.5,3 H4.5 M1.5,5 H5 M1.5,7 H4 M1.5,9 H4.5" stroke="#909090" stroke-width="0.8"/><path d="M1,0 V10" stroke="#606060" stroke-width="0.7"/></svg><svg style="left:128px;top:26px" width="7" height="10" viewBox="0 0 7 10"><rect x="0.5" y="0.5" width="6" height="1.3" fill="#3050e0"/><path d="M1,9.5 L1,4 L3.5,7 L6,4 L6,9.5" fill="none" stroke="#202020" stroke-width="1.3"/></svg><svg style="left:143px;top:26px" width="7" height="10" viewBox="0 0 7 10"><ellipse cx="3.5" cy="6.5" rx="3" ry="2.5" fill="#9098a8"/><path d="M3.5,0.5 V6" stroke="#3050c0" stroke-width="1.1"/></svg><svg style="left:151px;top:26px" width="7" height="10" viewBox="0 0 7 10"><rect x="0.5" y="1" width="6" height="8" fill="#d0d0dc"/><path d="M1,3 H6 M1,5 H6 M1,7 H6" stroke="#a0a0b8" stroke-width="0.6"/></svg><svg style="left:158px;top:26px" width="7" height="10" viewBox="0 0 7 10"><path d="M1.2,9 V3.5 A2.3,2.3 0 0 1 5.8,3.5 V9" fill="none" stroke="#707080" stroke-width="0.8"/><circle cx="1.5" cy="8.3" r="1.3" fill="#902020"/><circle cx="5.5" cy="8.3" r="1.3" fill="#902020"/><rect x="2.5" y="3" width="2" height="3" fill="#b0c0e0"/></svg><svg style="left:166px;top:26px" width="7" height="10" viewBox="0 0 7 10"><rect x="0.5" y="0.5" width="5.5" height="9" fill="#e4e4e4" stroke="#b0b0b0" stroke-width="0.5"/><path d="M1,1 L5.5,5.5 M5.5,1 L1,5.5" stroke="#b02828" stroke-width="1"/><path d="M4,7 L6,9" stroke="#3050d0" stroke-width="0.9"/></svg><svg style="left:181px;top:26px" width="7" height="10" viewBox="0 0 7 10"><circle cx="2.5" cy="3" r="2" fill="none" stroke="#208020" stroke-width="1"/><circle cx="4.5" cy="6.5" r="2" fill="none" stroke="#208020" stroke-width="1"/><path d="M0.5,9.5 H6.5" stroke="#60a060" stroke-width="0.5"/></svg><svg style="left:189px;top:26px" width="6" height="10" viewBox="0 0 6 10"><path d="M3,0.5 L6,4 H4 V9.5 H2 V4 H0Z" fill="#202020"/></svg><svg style="left:197px;top:26px" width="7" height="10" viewBox="0 0 7 10"><path d="M0.5,5 L3.5,2 V4 H6.5 V6 H3.5 V8Z" fill="#303030"/></svg><svg style="left:205px;top:26px" width="7" height="10" viewBox="0 0 7 10"><path d="M6.5,5 L3.5,2 V4 H0.5 V6 H3.5 V8Z" fill="#b0b0b0"/></svg><div style="left:213px;top:27px;width:1px;height:9px;border-left:1px dotted #b8b8b8"></div><svg style="left:216px;top:26px" width="7" height="10" viewBox="0 0 7 10"><rect x="0.5" y="0.5" width="6" height="9" fill="#e0e0e0" stroke="#b8b8b8" stroke-width="0.5"/><path d="M1.5,3 H3 M1.5,5 H3 M2.2,2 V7" stroke="#505050" stroke-width="0.6"/><rect x="4.5" y="1" width="1.3" height="7" fill="#3050d0"/></svg><div style="left:224px;top:25px;width:22px;height:12px;background:#fff;border:1px solid #d0d0d0;border-top-color:#a8a8a8;border-left-color:#a8a8a8"></div><span class="t" style="left:232px;top:28px;font-size:6.4px;line-height:6.4px;color:#606060;transform:scaleX(0.677);">100 ps</span><div style="left:246px;top:25px;width:5px;height:12px;background:#f0f0f0;border:1px solid #d0d0d0"></div><svg style="left:246px;top:26px" width="5" height="10" viewBox="0 0 5 10"><path d="M1,4 L2.5,1.5 L4,4Z M1,6.5 L2.5,9 L4,6.5Z" fill="#303030"/></svg><svg style="left:253.0px;top:26px" width="7" height="10" viewBox="0 0 7 10"><rect x="0.5" y="0.5" width="6" height="9" fill="#e0e0e0" stroke="#b8b8b8" stroke-width="0.5"/><path d="M1.5,3 H3 M1.5,5 H3 M2.2,2 V7" stroke="#505050" stroke-width="0.6"/><rect x="4.3" y="5" width="1.8" height="4" fill="#3050d0"/></svg><svg style="left:260.7px;top:26px" width="7" height="10" viewBox="0 0 7 10"><rect x="0.5" y="0.5" width="6" height="9" fill="#e0e0e0" stroke="#b8b8b8" stroke-width="0.5"/><path d="M1.5,3 H3 M1.5,5 H3 M2.2,2 V7" stroke="#505050" stroke-width="0.6"/><rect x="4.3" y="5" width="1.8" height="4" fill="#c04050"/></svg><svg style="left:268.4px;top:26px" width="7" height="10" viewBox="0 0 7 10"><rect x="0.5" y="0.5" width="6" height="9" fill="#e0e0e0" stroke="#b8b8b8" stroke-width="0.5"/><path d="M1.5,3 H3 M1.5,5 H3 M2.2,2 V7" stroke="#505050" stroke-width="0.6"/><rect x="4.3" y="5" width="1.8" height="4" fill="#3050d0"/></svg><svg style="left:277px;top:26px" width="7" height="10" viewBox="0 0 7 10"><rect x="0.5" y="0.5" width="6" height="9" fill="#e0e0e0" stroke="#b8b8b8" stroke-width="0.5"/><path d="M1.3,1 L5.7,5.5 M5.7,1 L1.3,5.5" stroke="#8a1818" stroke-width="1.1"/><rect x="4.3" y="6" width="1.8" height="3" fill="#3050d0"/></svg><svg style="left:284px;top:26px" width="7" height="10" viewBox="0 0 7 10"><path d="M5.5,2.5 A2.5,2.8 0 1 0 5.5,7.5" fill="none" stroke="#e86050" stroke-width="1.5"/></svg><div style="left:293px;top:27px;width:1px;height:9px;border-left:1px dotted #b8b8b8"></div><svg style="left:297px;top:26px" width="7" height="10" viewBox="0 0 7 10"><rect x="0.5" y="0.5" width="6" height="9" fill="#e4e4e4" stroke="#a8a8a8" stroke-width="0.5"/><rect x="1.5" y="5" width="1.3" height="4" fill="#d03030"/><rect x="2.8" y="3" width="1.3" height="6" fill="#30a030"/><rect x="4.1" y="4" width="1.3" height="5" fill="#e0b020"/></svg><svg style="left:306px;top:26px" width="7" height="10" viewBox="0 0 7 10"><rect x="0.5" y="0.5" width="6" height="9" fill="#e4e4e4" stroke="#a8a8a8" stroke-width="0.5"/><rect x="2.8" y="4" width="1.3" height="5" fill="#d03030"/><rect x="4.1" y="3" width="1.3" height="6" fill="#30a030"/></svg><svg style="left:315px;top:26px" width="6" height="10" viewBox="0 0 6 10"><circle cx="3" cy="3.5" r="2.3" fill="#505050"/><path d="M1,5 L3,9 L5.5,5" fill="#5090e0"/></svg><svg style="left:330px;top:26px" width="5" height="10" viewBox="0 0 5 10"><path d="M2.5,1 V7" stroke="#2050e0" stroke-width="1.2"/><path d="M0.5,3 L2.5,0.5 L4.5,3Z" fill="#2050e0"/><circle cx="2.5" cy="8.8" r="1" fill="#2050e0"/></svg><svg style="left:337px;top:26px" width="6" height="10" viewBox="0 0 6 10"><path d="M1.5,8 A2.5,2.5 0 1 1 5,4" fill="none" stroke="#2050e0" stroke-width="1.3"/><path d="M3.5,2.5 L6,4.5 L3.5,6Z" fill="#2050e0"/></svg><svg style="left:346px;top:26px" width="5" height="10" viewBox="0 0 5 10"><path d="M2.5,1 V7" stroke="#2050e0" stroke-width="1.2"/><path d="M0.5,3 L2.5,0.5 L4.5,3Z" fill="#2050e0"/><circle cx="2.5" cy="8.8" r="1" fill="#2050e0"/></svg><div style="left:353px;top:27px;width:1px;height:9px;border-left:1px dotted #b8b8b8"></div><svg style="left:357px;top:26px" width="6" height="10" viewBox="0 0 6 10"><path d="M3,0.5 V5.5" stroke="#2050e0" stroke-width="1.2"/><path d="M1,3.5 L3,6.5 L5,3.5Z" fill="#2050e0"/><path d="M0.5,8.5 H5.5" stroke="#2050e0" stroke-width="1.2"/></svg><svg style="left:365px;top:26px" width="6" height="10" viewBox="0 0 6 10"><path d="M1.5,6.5 A2.5,2.5 0 1 1 5,3" fill="none" stroke="#2050e0" stroke-width="1.3"/><path d="M0.5,8.5 H5.5" stroke="#2050e0" stroke-width="1.2"/></svg><svg style="left:373px;top:26px" width="6" height="10" viewBox="0 0 6 10"><path d="M3,7 V1" stroke="#2050e0" stroke-width="1.2"/><path d="M1,3.5 L3,0.5 L5,3.5Z" fill="#2050e0"/><path d="M0.5,8.5 H5.5" stroke="#2050e0" stroke-width="1.2"/></svg><span class="t" style="left:385px;top:27.5px;font-size:6px;line-height:6px;color:#404040;transform:scaleX(0.722);">Layout</span><div style="left:400px;top:25px;width:51px;height:12px;background:#f8f8f8;border:1px solid #c8c8c8;border-top-color:#a0a0a0"></div><span class="t" style="left:402px;top:28.3px;font-size:6.2px;line-height:6.2px;color:#303030;transform:scaleX(0.638);font-family:'Liberation Mono',monospace">Simulate</span><svg style="left:443px;top:26px" width="7" height="10"><rect x="0" y="0" width="7" height="10" fill="#e8e8e8" stroke="#c8c8c8" stroke-width="0.6"/><path d="M1.2,3.5 L5.8,3.5 L3.5,7Z" fill="#101010"/></svg><span class="t" style="left:459px;top:27.5px;font-size:6px;line-height:6px;color:#8a7868;transform:scaleX(0.620);">ColumnLayout</span><div style="left:485px;top:25px;width:84px;height:12px;background:#f2f2f2;border:1px solid #c8c8c8;border-top-color:#a8a8a8"></div><span class="t" style="left:487px;top:28.3px;font-size:6.2px;line-height:6.2px;color:#a8a8a8;transform:scaleX(0.591);font-family:'Liberation Mono',monospace">AllColumns</span><svg style="left:561px;top:26px" width="7" height="10"><rect x="0" y="0" width="7" height="10" fill="#e4e4e4" stroke="#c8c8c8" stroke-width="0.6"/><path d="M1.2,3.5 L5.8,3.5 L3.5,7Z" fill="#707070"/></svg><svg style="left:577px;top:26px" width="6" height="10" viewBox="0 0 6 10"><rect x="0.5" y="1" width="3.5" height="6" fill="#4a90e0"/><rect x="2" y="2.5" width="3" height="4.5" fill="#90c0f0"/><circle cx="3.5" cy="8" r="1.7" fill="#40a040"/></svg><div style="left:585px;top:31px;width:1px;height:1px;background:#404040"></div><svg style="left:588px;top:26px" width="6" height="10" viewBox="0 0 6 10"><rect x="0.5" y="1" width="3.5" height="6" fill="#4a90e0"/><rect x="2" y="2.5" width="3" height="4.5" fill="#90c0f0"/><circle cx="3.5" cy="8" r="1.7" fill="#e06020"/></svg><div style="left:596px;top:31px;width:1px;height:1px;background:#404040"></div><svg style="left:599px;top:26px" width="6" height="10" viewBox="0 0 6 10"><rect x="0.5" y="1" width="3.5" height="6" fill="#4a90e0"/><rect x="2" y="2.5" width="3" height="4.5" fill="#90c0f0"/><circle cx="3.5" cy="8" r="1.7" fill="#e0a020"/></svg><svg style="left:606px;top:26px" width="6" height="10" viewBox="0 0 6 10"><rect x="0.5" y="1" width="3.5" height="6" fill="#4a90e0"/><rect x="2" y="2.5" width="3" height="4.5" fill="#90c0f0"/><circle cx="3.5" cy="8" r="1.7" fill="#5080e0"/></svg><div style="left:614px;top:31px;width:1px;height:1px;background:#404040"></div><svg style="left:617px;top:26px" width="6" height="10" viewBox="0 0 6 10"><rect x="0.5" y="1" width="3.5" height="6" fill="#4a90e0"/><rect x="2" y="2.5" width="3" height="4.5" fill="#90c0f0"/><circle cx="3.5" cy="8" r="1.7" fill="#40a040"/></svg><div style="left:13px;top:42px;width:8px;height:10px;background:#fafafa;border:1px solid #d8d8d8;border-left-color:#b8b8b8;border-top-color:#b8b8b8"></div><div style="left:22px;top:42px;width:8px;height:10px;background:#fafafa;border:1px solid #d8d8d8;border-left-color:#b8b8b8;border-top-color:#b8b8b8"></div><div style="left:31px;top:42px;width:8px;height:10px;background:#fafafa;border:1px solid #d8d8d8;border-left-color:#b8b8b8;border-top-color:#b8b8b8"></div><div style="left:40px;top:42px;width:8px;height:10px;background:#fafafa;border:1px solid #d8d8d8;border-left-color:#b8b8b8;border-top-color:#b8b8b8"></div><div style="left:49px;top:42px;width:8px;height:10px;background:#fafafa;border:1px solid #d8d8d8;border-left-color:#b8b8b8;border-top-color:#b8b8b8"></div><span class="t" style="left:16px;top:44.5px;font-size:5.5px;line-height:5.5px;color:#b0b0b0;transform:scaleX(1.079);">1</span><span class="t" style="left:25px;top:44.5px;font-size:5.5px;line-height:5.5px;color:#b0b0b0;transform:scaleX(1.079);">0</span><span class="t" style="left:33px;top:44.5px;font-size:5.5px;line-height:5.5px;color:#b0b0b0;transform:scaleX(0.752);">00</span><span class="t" style="left:51px;top:44.5px;font-size:5.5px;line-height:5.5px;color:#b0b0b0;transform:scaleX(0.965);">All</span><svg style="left:59px;top:42px" width="7" height="10" viewBox="0 0 7 10"><path d="M1,8.5 L5.5,2" stroke="#90b0f0" stroke-width="2"/><path d="M5.5,2 L6.5,0.8" stroke="#c8c8e8" stroke-width="1.4"/></svg><div style="left:72px;top:41px;width:8px;height:11px;border-left:1px solid #909090;border-top:1px solid #909090"></div><svg style="left:74px;top:42px" width="6" height="10" viewBox="0 0 6 10"><path d="M1,1 L1,7.5 L2.5,6 L3.8,8.5 L4.8,8 L3.6,5.6 L5.6,5.6Z" fill="#202020"/></svg><svg style="left:84px;top:42px" width="7" height="10" viewBox="0 0 7 10"><rect x="0.5" y="0.5" width="4" height="5" fill="none" stroke="#606060" stroke-width="0.6"/><circle cx="3.8" cy="5" r="1.8" fill="#303030"/><path d="M5,6 L6.5,8.5" stroke="#303030" stroke-width="0.9"/><path d="M0,9.5 H7" stroke="#909090" stroke-width="0.5"/></svg><svg style="left:93px;top:42px" width="7" height="10" viewBox="0 0 7 10"><path d="M3.5,0.5 V9.5 M0.5,5 H6.5" stroke="#707070" stroke-width="0.8"/><rect x="1.5" y="3" width="4" height="4" fill="none" stroke="#808080" stroke-width="0.5"/></svg><svg style="left:101px;top:42px" width="7" height="10" viewBox="0 0 7 10"><path d="M0.5,2 H6.5 M0.5,4 H6.5 M0.5,6 H6.5 M0.5,8 H6.5" stroke="#808080" stroke-width="0.7"/><path d="M3,1 V9" stroke="#505050" stroke-width="0.5"/></svg><div style="left:111px;top:43px;width:1px;height:9px;border-left:1px dotted #b8b8b8"></div><svg style="left:113px;top:42px" width="8" height="10" viewBox="0 0 8 10"><rect x="1" y="0.5" width="3.5" height="9" rx="0.8" fill="#505050"/><circle cx="2.75" cy="2.5" r="1" fill="#e02020"/><circle cx="2.75" cy="5" r="1" fill="#e0c020"/><circle cx="2.75" cy="7.5" r="1" fill="#20c020"/><path d="M5,3 L7.5,5 L5,7Z" fill="#b0b0b0"/></svg><svg style="left:127px;top:42px" width="6" height="10" viewBox="0 0 6 10"><circle cx="3" cy="2.5" r="2" fill="#c8a830"/><path d="M3,4 V9" stroke="#c8a830" stroke-width="1.3"/><path d="M3,6.5 H5 M3,8.5 H5" stroke="#c8a830" stroke-width="0.9"/><rect x="0.5" y="8" width="5" height="1.5" fill="#d8b840"/></svg><svg style="left:135px;top:42px" width="6" height="10" viewBox="0 0 6 10"><circle cx="3" cy="2.5" r="2" fill="#c8a830"/><path d="M3,4 V9" stroke="#c8a830" stroke-width="1.3"/><path d="M3,6.5 H5 M3,8.5 H5" stroke="#c8a830" stroke-width="0.9"/><rect x="0.5" y="8" width="5" height="1.5" fill="#d8b840"/></svg><svg style="left:144px;top:42px" width="7" height="10" viewBox="0 0 7 10"><path d="M0.5,1 V9 H2 M0.5,1 H2" stroke="#50b050" stroke-width="0.7" fill="none"/><path d="M1.5,5 L5.5,3 V7Z" fill="#2030c0"/></svg><svg style="left:152px;top:42px" width="7" height="10" viewBox="0 0 7 10"><path d="M6,1 V9 H4.5 M6,1 H4.5" stroke="#50b050" stroke-width="0.7" fill="none"/><path d="M5,5 L1,3 V7Z" fill="#2030c0"/></svg><svg style="left:160px;top:42px" width="7" height="10" viewBox="0 0 7 10"><path d="M0.5,1 L2,1 L4.5,9 L6,9" stroke="#50b050" stroke-width="0.7" fill="none"/><path d="M1.5,6 L5,6 L3.2,8Z" fill="#4030c0"/></svg><svg style="left:168px;top:42px" width="7" height="10" viewBox="0 0 7 10"><path d="M0.5,1 L2,1 L4.5,9 L6,9" stroke="#50b050" stroke-width="0.7" fill="none"/><path d="M1.5,6 L5,6 L3.2,8Z" fill="#4030c0"/></svg><svg style="left:176px;top:42px" width="7" height="10" viewBox="0 0 7 10"><path d="M0.5,9 L2,9 L4.5,1 L6,1" stroke="#50b050" stroke-width="0.7" fill="none"/><path d="M1.5,6 L5,6 L3.2,8Z" fill="#6040c0"/></svg><svg style="left:184px;top:42px" width="7" height="10" viewBox="0 0 7 10"><path d="M0.5,9 L2,9 L4.5,1 L6,1" stroke="#50b050" stroke-width="0.7" fill="none"/><path d="M1.5,6 L5,6 L3.2,8Z" fill="#6040c0"/></svg><svg style="left:196px;top:42px" width="8" height="10" viewBox="0 0 8 10"><path d="M0.5,1.5 L3,5 L0.5,8.5" stroke="#303030" stroke-width="0.8" fill="none"/><path d="M2.5,5 L7,5" stroke="#2070e0" stroke-width="1.8"/></svg><div style="left:206px;top:47px;width:1px;height:1px;background:#404040"></div><svg style="left:209px;top:42px" width="8" height="10" viewBox="0 0 8 10"><path d="M7,1.5 L4.5,5 L7,8.5" stroke="#303030" stroke-width="0.8" fill="none"/><path d="M0.5,5 L5,5" stroke="#2070e0" stroke-width="1.8"/></svg><div style="left:218px;top:47px;width:1px;height:1px;background:#404040"></div><svg style="left:220px;top:42px" width="8" height="10" viewBox="0 0 8 10"><path d="M0.5,1.5 L2.5,1.5 L2.5,8.5 L0.5,8.5" stroke="#303030" stroke-width="0.8" fill="none"/><path d="M2,5 L7,5" stroke="#20a040" stroke-width="1.8"/></svg><div style="left:230px;top:43px;width:1px;height:9px;border-left:1px dotted #b8b8b8"></div><span class="t" style="left:232px;top:44px;font-size:6.2px;line-height:6.2px;color:#404040;transform:scaleX(0.562);">Search:</span><div style="left:246px;top:41px;width:45px;height:12px;background:#fff;border:1px solid #b0b0b0;border-bottom-color:#e0e0e0;border-right-color:#e0e0e0"></div><svg style="left:284px;top:42px" width="7" height="11"><rect x="0" y="0" width="7" height="11" fill="#ececec"/><path d="M0.8,4 L6.2,4 L3.5,8Z" fill="#101010"/></svg><svg style="left:296px;top:42px" width="7" height="10" viewBox="0 0 7 10"><circle cx="3" cy="3.5" r="2.2" fill="#b8b8c0"/><path d="M1,9 L5,6.5" stroke="#7090e8" stroke-width="1.2"/></svg><svg style="left:303px;top:42px" width="7" height="10" viewBox="0 0 7 10"><circle cx="3" cy="3.5" r="2.2" fill="#b8b8c0"/><path d="M1,9 L5,6.5" stroke="#7090e8" stroke-width="1.2"/></svg><svg style="left:311px;top:42px" width="7" height="10" viewBox="0 0 7 10"><path d="M1,8 L4,1 L6.5,2.5 L3.5,9Z" fill="#8890a0"/><path d="M3.5,9 L6,6" stroke="#70a0e8" stroke-width="1.1"/></svg><svg style="left:323px;top:42px" width="7" height="10" viewBox="0 0 7 10"><circle cx="3" cy="3.5" r="2.3" fill="#e8e8e8" stroke="#404040" stroke-width="0.8"/><path d="M4.5,5.5 L6.5,8.5" stroke="#2040b0" stroke-width="1.4"/></svg><svg style="left:331px;top:42px" width="7" height="10" viewBox="0 0 7 10"><circle cx="3" cy="3.5" r="2.3" fill="#e8e8e8" stroke="#404040" stroke-width="0.8"/><path d="M4.5,5.5 L6.5,8.5" stroke="#2040b0" stroke-width="1.4"/></svg><svg style="left:339px;top:42px" width="7" height="10" viewBox="0 0 7 10"><circle cx="3" cy="3.5" r="2.3" fill="#204080" stroke="#404040" stroke-width="0.8"/><path d="M4.5,5.5 L6.5,8.5" stroke="#2040b0" stroke-width="1.4"/></svg><svg style="left:347px;top:42px" width="7" height="10" viewBox="0 0 7 10"><circle cx="3" cy="3.5" r="2.3" fill="#e8e8e8" stroke="#404040" stroke-width="0.8"/><path d="M4.5,5.5 L6.5,8.5" stroke="#2040b0" stroke-width="1.4"/></svg><svg style="left:355px;top:42px" width="7" height="10" viewBox="0 0 7 10"><circle cx="3" cy="3.5" r="2.3" fill="#e8e8e8" stroke="#404040" stroke-width="0.8"/><path d="M4.5,5.5 L6.5,8.5" stroke="#2040b0" stroke-width="1.4"/></svg><svg style="left:370px;top:41px" width="7" height="12" viewBox="0 0 7 12"><rect x="0.5" y="1" width="5.5" height="9.5" fill="#fff" stroke="#707070" stroke-width="0.6"/><path d="M3.2,3 V10" stroke="#40b060" stroke-width="0.9"/><path d="M0.5,10.5 H6" stroke="#40b060" stroke-width="0.8"/></svg><svg style="left:378px;top:41px" width="7" height="12" viewBox="0 0 7 12"><rect x="1.5" y="1" width="3.5" height="10" fill="#102848"/><path d="M0.5,11 H6" stroke="#40b060" stroke-width="0.9"/></svg><svg style="left:386px;top:41px" width="7" height="12" viewBox="0 0 7 12"><rect x="0.5" y="1" width="6" height="10" fill="#106018" stroke="#909090" stroke-width="0.5"/></svg><div style="left:396px;top:43px;width:1px;height:9px;border-left:1px dotted #b8b8b8"></div><svg style="left:400px;top:42px" width="6" height="11" viewBox="0 0 6 11"><rect x="0.5" y="1" width="5" height="9" fill="#8888b8"/><path d="M2.2,1 V10 M3.9,1 V10" stroke="#a8a8d8" stroke-width="0.5"/></svg><svg style="left:408px;top:42px" width="6" height="11" viewBox="0 0 6 11"><path d="M1.5,10 V1 H5" stroke="#b0b050" stroke-width="0.9" fill="none"/><path d="M3,10 V3" stroke="#5070a8" stroke-width="0.9"/></svg><svg style="left:416px;top:42px" width="6" height="11" viewBox="0 0 6 11"><path d="M0.5,10 H2 L3.5,1 H5" stroke="#a0d8a0" stroke-width="0.9" fill="none"/></svg><svg style="left:424px;top:42px" width="6" height="11" viewBox="0 0 6 11"><path d="M0.5,10 H2 L3.5,1 H5" stroke="#c8d890" stroke-width="0.9" fill="none"/></svg><svg style="left:437px;top:42px" width="7" height="10" viewBox="0 0 7 10"><path d="M0.5,8 L3,2 L6,2" stroke="#a0a0a0" stroke-width="0.9" fill="none"/><path d="M1,9 H6" stroke="#808080" stroke-width="0.7"/></svg><div style="left:446px;top:47px;width:1px;height:1px;background:#404040"></div><svg style="left:449px;top:42px" width="7" height="10" viewBox="0 0 7 10"><path d="M1,1.5 L6,8.5 M6,1.5 L1,8.5" stroke="#b04848" stroke-width="1.2"/></svg><div style="left:457px;top:47px;width:1px;height:1px;background:#404040"></div><svg style="left:460px;top:42px" width="7" height="10" viewBox="0 0 7 10"><circle cx="3.5" cy="6" r="2.5" fill="none" stroke="#808080" stroke-width="0.8"/><path d="M3.5,1 V5" stroke="#808080" stroke-width="0.8"/></svg><svg style="left:473px;top:42px" width="7" height="10" viewBox="0 0 7 10"><path d="M0.5,9 L2,9 L2,1 L3.5,1" stroke="#50b050" stroke-width="0.9" fill="none"/><path d="M2,5 L6,5" stroke="#3080f0" stroke-width="1.6"/></svg><svg style="left:482px;top:42px" width="7" height="10" viewBox="0 0 7 10"><path d="M0.5,9 L2,9 L2,1 L3.5,1" stroke="#e0c020" stroke-width="0.9" fill="none"/><path d="M2,5 L6,5" stroke="#3080f0" stroke-width="1.6"/></svg><svg style="left:490px;top:42px" width="7" height="10" viewBox="0 0 7 10"><path d="M0.5,9 L2,9 L2,1 L3.5,1" stroke="#e0c020" stroke-width="0.9" fill="none"/><path d="M2,5 L6,5" stroke="#3080f0" stroke-width="1.6"/></svg><svg style="left:497px;top:42px" width="7" height="10" viewBox="0 0 7 10"><path d="M0.5,9 L2,9 L2,1 L3.5,1" stroke="#e06060" stroke-width="0.9" fill="none"/><path d="M2,5 L6,5" stroke="#3080f0" stroke-width="1.6"/></svg><svg style="left:505px;top:42px" width="7" height="10" viewBox="0 0 7 10"><path d="M0.5,9 L2,9 L2,1 L3.5,1" stroke="#404040" stroke-width="0.9" fill="none"/><path d="M2,5 L6,5" stroke="#3080f0" stroke-width="1.6"/></svg><svg style="left:513px;top:42px" width="7" height="10" viewBox="0 0 7 10"><path d="M0.5,9 L2,9 L2,1 L3.5,1" stroke="#6080e0" stroke-width="0.9" fill="none"/><path d="M2,5 L6,5" stroke="#3080f0" stroke-width="1.6"/></svg><svg style="left:521px;top:42px" width="7" height="10" viewBox="0 0 7 10"><path d="M0.5,9 L2,9 L2,1 L3.5,1" stroke="#4070e0" stroke-width="0.9" fill="none"/><path d="M2,5 L6,5" stroke="#3080f0" stroke-width="1.6"/></svg><div style="left:529px;top:43px;width:1px;height:9px;border-left:1px dotted #b8b8b8"></div><svg style="left:532px;top:41px" width="8" height="12" viewBox="0 0 8 12"><rect x="0.5" y="2" width="7" height="9" fill="#d8d8d8" stroke="#909090" stroke-width="0.5"/><rect x="1.8" y="4" width="4.5" height="6" fill="#3a6a48"/></svg><div style="left:8px;top:56px;width:105px;height:9px;background:linear-gradient(#f4f4f4,#e0e0e0)"></div><svg style="left:9px;top:56px" width="8" height="9"><path d="M1.5,8 V3.5 A2.5,2.5 0 0 1 6.5,3.5 V8" fill="none" stroke="#707080" stroke-width="0.8"/><circle cx="1.8" cy="7.5" r="1.4" fill="#901818"/><circle cx="6.2" cy="7.5" r="1.4" fill="#901818"/></svg><span class="t" style="left:16px;top:57.5px;font-size:6.4px;line-height:6.4px;color:#202020;transform:scaleX(0.586);">sim -Default</span><div style="left:40px;top:59px;width:57px;height:3px;border-top:1px solid #c8c8c8;border-bottom:1px solid #c8c8c8"></div><svg style="left:99px;top:57px" width="14" height="8"><path d="M1,1.5 H4 M2.5,1.5 V4 M0.8,4 H4.2 M2.5,4 V7" stroke="#202020" stroke-width="0.9"/><path d="M6,6 L9,2 M7.5,2 H9.2 V3.5" stroke="#202020" stroke-width="0.9" fill="none"/><path d="M10.5,1.5 L13.5,6.5 M13.5,1.5 L10.5,6.5" stroke="#202020" stroke-width="0.9"/></svg><div style="left:8px;top:65px;width:105px;height:10px;background:linear-gradient(#fafafa,#ececec);border-bottom:1px solid #d8d8d8"></div><div style="left:60px;top:66px;width:1px;height:8px;background:#d0d0d0"></div><div style="left:85px;top:66px;width:1px;height:8px;background:#d0d0d0"></div><svg style="left:0;top:0" width="903" height="508"><polygon points="8.70,69.10 11.70,69.10 10.20,70.90" fill="#303030"/></svg><span class="t" style="left:12px;top:67.5px;font-size:6.4px;line-height:6.4px;color:#303030;transform:scaleX(0.661);">Instance</span><span class="t" style="left:61px;top:67.5px;font-size:6.4px;line-height:6.4px;color:#303030;transform:scaleX(0.687);">Design unit</span><span class="t" style="left:86px;top:67.5px;font-size:6.4px;line-height:6.4px;color:#303030;transform:scaleX(0.567);">Design unit type</span><div style="left:9px;top:75px;width:104px;height:8.4px;background:#c5d3e3"></div><svg style="left:8px;top:75px" width="105" height="95" viewBox="8 75 105 95"><path d="M18.5,84 V151.5 M25,92.5 V135" stroke="#c0c0c0" stroke-width="0.8" fill="none"/><circle cx="12.30" cy="79.20" r="2" fill="#f4f4f8" stroke="#a0a8b8" stroke-width="0.5"/><path d="M11.30,79.20 H13.30" stroke="#303030" stroke-width="0.6"/><path d="M16.50,82.40 V77.70 L17.50,76.40 H20.50 V81.20 L19.50,82.40Z" fill="#103a80"/><rect x="17.50" y="76.40" width="3" height="4.8" fill="#20b0f0"/><text x="22.50" y="81.30" font-size="6.4" fill="#303030" font-family="Liberation Sans" textLength="11.03" lengthAdjust="spacingAndGlyphs">top_tb</text><text x="61" y="81.30" font-size="6.4" fill="#303030" font-family="Liberation Sans" textLength="11.03" lengthAdjust="spacingAndGlyphs">top_tb</text><text x="85.5" y="81.30" font-size="6.4" fill="#303030" font-family="Liberation Sans" textLength="13.01" lengthAdjust="spacingAndGlyphs">Module</text><circle cx="17.80" cy="87.65" r="2" fill="#f4f4f8" stroke="#a0a8b8" stroke-width="0.5"/><path d="M16.80,87.65 H18.80" stroke="#303030" stroke-width="0.6"/><path d="M22.00,90.85 V86.15 L23.00,84.85 H26.00 V89.65 L25.00,90.85Z" fill="#103a80"/><rect x="23.00" y="84.85" width="3" height="4.8" fill="#20b0f0"/><text x="28.00" y="89.75" font-size="6.4" fill="#303030" font-family="Liberation Sans" textLength="17.42" lengthAdjust="spacingAndGlyphs">inster_top</text><text x="61" y="89.75" font-size="6.4" fill="#303030" font-family="Liberation Sans" textLength="5.52" lengthAdjust="spacingAndGlyphs">top</text><text x="85.5" y="89.75" font-size="6.4" fill="#303030" font-family="Liberation Sans" textLength="13.01" lengthAdjust="spacingAndGlyphs">Module</text><circle cx="24.10" cy="96.10" r="2" fill="#f4f4f8" stroke="#a0a8b8" stroke-width="0.5"/><path d="M23.10,96.10 H25.10" stroke="#303030" stroke-width="0.6"/><path d="M24.10,95.10 V97.10" stroke="#303030" stroke-width="0.6"/><path d="M28.30,99.30 V94.60 L29.30,93.30 H32.30 V98.10 L31.30,99.30Z" fill="#103a80"/><rect x="29.30" y="93.30" width="3" height="4.8" fill="#20b0f0"/><text x="34.30" y="98.20" font-size="6.4" fill="#303030" font-family="Liberation Sans" textLength="15.88" lengthAdjust="spacingAndGlyphs">pll_inster</text><text x="61" y="98.20" font-size="6.4" fill="#303030" font-family="Liberation Sans" textLength="15.88" lengthAdjust="spacingAndGlyphs">my_1gpll</text><text x="85.5" y="98.20" font-size="6.4" fill="#303030" font-family="Liberation Sans" textLength="13.01" lengthAdjust="spacingAndGlyphs">Module</text><circle cx="24.10" cy="104.55" r="2" fill="#f4f4f8" stroke="#a0a8b8" stroke-width="0.5"/><path d="M23.10,104.55 H25.10" stroke="#303030" stroke-width="0.6"/><path d="M24.10,103.55 V105.55" stroke="#303030" stroke-width="0.6"/><path d="M28.30,107.75 V103.05 L29.30,101.75 H32.30 V106.55 L31.30,107.75Z" fill="#103a80"/><rect x="29.30" y="101.75" width="3" height="4.8" fill="#20b0f0"/><text x="34.30" y="106.65" font-size="6.4" fill="#303030" font-family="Liberation Sans" textLength="25.36" lengthAdjust="spacingAndGlyphs">pulses_inste...</text><text x="61" y="106.65" font-size="6.4" fill="#303030" font-family="Liberation Sans" textLength="11.47" lengthAdjust="spacingAndGlyphs">pulses</text><text x="85.5" y="106.65" font-size="6.4" fill="#303030" font-family="Liberation Sans" textLength="13.01" lengthAdjust="spacingAndGlyphs">Module</text><circle cx="24.10" cy="113.00" r="2" fill="#f4f4f8" stroke="#a0a8b8" stroke-width="0.5"/><path d="M23.10,113.00 H25.10" stroke="#303030" stroke-width="0.6"/><path d="M24.10,112.00 V114.00" stroke="#303030" stroke-width="0.6"/><path d="M28.30,116.20 V111.50 L29.30,110.20 H32.30 V115.00 L31.30,116.20Z" fill="#103a80"/><rect x="29.30" y="110.20" width="3" height="4.8" fill="#20b0f0"/><text x="34.30" y="115.10" font-size="6.4" fill="#303030" font-family="Liberation Sans" textLength="17.20" lengthAdjust="spacingAndGlyphs">inster_fifo</text><text x="61" y="115.10" font-size="6.4" fill="#303030" font-family="Liberation Sans" textLength="5.29" lengthAdjust="spacingAndGlyphs">fifo</text><text x="85.5" y="115.10" font-size="6.4" fill="#303030" font-family="Liberation Sans" textLength="13.01" lengthAdjust="spacingAndGlyphs">Module</text><circle cx="24.10" cy="121.45" r="2" fill="#f4f4f8" stroke="#a0a8b8" stroke-width="0.5"/><path d="M23.10,121.45 H25.10" stroke="#303030" stroke-width="0.6"/><path d="M24.10,120.45 V122.45" stroke="#303030" stroke-width="0.6"/><path d="M28.30,124.65 V119.95 L29.30,118.65 H32.30 V123.45 L31.30,124.65Z" fill="#103a80"/><rect x="29.30" y="118.65" width="3" height="4.8" fill="#20b0f0"/><text x="34.30" y="123.55" font-size="6.4" fill="#303030" font-family="Liberation Sans" textLength="19.19" lengthAdjust="spacingAndGlyphs">shift_inster</text><text x="61" y="123.55" font-size="6.4" fill="#303030" font-family="Liberation Sans" textLength="7.28" lengthAdjust="spacingAndGlyphs">shift</text><text x="85.5" y="123.55" font-size="6.4" fill="#303030" font-family="Liberation Sans" textLength="13.01" lengthAdjust="spacingAndGlyphs">Module</text><circle cx="24.10" cy="129.90" r="2" fill="#f4f4f8" stroke="#a0a8b8" stroke-width="0.5"/><path d="M23.10,129.90 H25.10" stroke="#303030" stroke-width="0.6"/><path d="M24.10,128.90 V130.90" stroke="#303030" stroke-width="0.6"/><path d="M28.30,133.10 V128.40 L29.30,127.10 H32.30 V131.90 L31.30,133.10Z" fill="#103a80"/><rect x="29.30" y="127.10" width="3" height="4.8" fill="#20b0f0"/><text x="34.30" y="132.00" font-size="6.4" fill="#303030" font-family="Liberation Sans" textLength="18.75" lengthAdjust="spacingAndGlyphs">inster_uart</text><text x="61" y="132.00" font-size="6.4" fill="#303030" font-family="Liberation Sans" textLength="14.56" lengthAdjust="spacingAndGlyphs">uart_top</text><text x="85.5" y="132.00" font-size="6.4" fill="#303030" font-family="Liberation Sans" textLength="13.01" lengthAdjust="spacingAndGlyphs">Module</text><path d="M24.30,138.35 H27.30" stroke="#a8a8a8" stroke-width="0.6"/><circle cx="30.80" cy="138.35" r="3" fill="#20a0e0"/><circle cx="30.10" cy="137.35" r="1.3" fill="#a0e0ff"/><text x="34.30" y="140.45" font-size="6.4" fill="#303030" font-family="Liberation Sans" textLength="24.92" lengthAdjust="spacingAndGlyphs">#ASSIGN#2...</text><text x="61" y="140.45" font-size="6.4" fill="#303030" font-family="Liberation Sans" textLength="5.52" lengthAdjust="spacingAndGlyphs">top</text><text x="85.5" y="140.45" font-size="6.4" fill="#303030" font-family="Liberation Sans" textLength="14.33" lengthAdjust="spacingAndGlyphs">Process</text><path d="M18.00,146.80 H21.00" stroke="#a8a8a8" stroke-width="0.6"/><circle cx="24.50" cy="146.80" r="3" fill="#20a0e0"/><circle cx="23.80" cy="145.80" r="1.3" fill="#a0e0ff"/><text x="28.00" y="148.90" font-size="6.4" fill="#303030" font-family="Liberation Sans" textLength="24.63" lengthAdjust="spacingAndGlyphs">#ALWAYS#26</text><text x="61" y="148.90" font-size="6.4" fill="#303030" font-family="Liberation Sans" textLength="11.03" lengthAdjust="spacingAndGlyphs">top_tb</text><text x="85.5" y="148.90" font-size="6.4" fill="#303030" font-family="Liberation Sans" textLength="14.33" lengthAdjust="spacingAndGlyphs">Process</text><path d="M18.00,155.25 H21.00" stroke="#a8a8a8" stroke-width="0.6"/><circle cx="24.50" cy="155.25" r="3" fill="#20a0e0"/><circle cx="23.80" cy="154.25" r="1.3" fill="#a0e0ff"/><text x="28.00" y="157.35" font-size="6.4" fill="#303030" font-family="Liberation Sans" textLength="24.63" lengthAdjust="spacingAndGlyphs">#ALWAYS#27</text><text x="61" y="157.35" font-size="6.4" fill="#303030" font-family="Liberation Sans" textLength="11.03" lengthAdjust="spacingAndGlyphs">top_tb</text><text x="85.5" y="157.35" font-size="6.4" fill="#303030" font-family="Liberation Sans" textLength="14.33" lengthAdjust="spacingAndGlyphs">Process</text><rect x="15.50" y="160.20" width="6" height="7" fill="#4070e0"/><path d="M16.50,165.70 L18.50,161.70 L20.50,165.70" stroke="#e03030" stroke-width="1" fill="#40c040"/><text x="22.50" y="165.80" font-size="6.4" fill="#303030" font-family="Liberation Sans" textLength="29.33" lengthAdjust="spacingAndGlyphs">#vsim_capacity#</text><text x="85.5" y="165.80" font-size="6.4" fill="#303030" font-family="Liberation Sans" textLength="15.44" lengthAdjust="spacingAndGlyphs">Capacity</text></svg><div style="left:8px;top:477px;width:105px;height:7px;background:#f4f4f4"></div><div style="left:9px;top:477px;width:5px;height:7px;background:#fbfbfb;border-right:1px solid #c8c8c8"></div><div style="left:14px;top:477px;width:36px;height:7px;background:#f0f0f0;border:1px solid #c8c8c8;border-top:0"></div><div style="left:107px;top:477px;width:6px;height:7px;background:#fbfbfb;border-left:1px solid #c8c8c8;border-bottom:1px solid #a0a0a0"></div><svg style="left:0;top:0" width="903" height="508"><polygon points="12.46,479.40 12.46,482.60 10.54,481.00" fill="#202020"/></svg><svg style="left:0;top:0" width="903" height="508"><polygon points="109.54,479.40 109.54,482.60 111.46,481.00" fill="#202020"/></svg><div style="left:116px;top:56px;width:52px;height:9px;background:linear-gradient(#f4f4f4,#e0e0e0)"></div><svg style="left:116px;top:56px" width="9" height="9"><path d="M4,0 L7,3 L4,6 L1,3Z" fill="#c030d0"/><path d="M5,3 L8,6 L5,9 L2,6Z" fill="#2060ff"/><path d="M4.5,2 L7,4.5 L4.5,7 L2,4.5Z" fill="#30d0ff" opacity="0.8"/><path d="M6,4.5 L9,6 L6,8Z" fill="#30b040"/></svg><span class="t" style="left:124px;top:57.5px;font-size:6.4px;line-height:6.4px;color:#202020;transform:scaleX(0.737);">Objects</span><div style="left:144px;top:59px;width:8px;height:3px;border-top:1px solid #c8c8c8;border-bottom:1px solid #c8c8c8"></div><svg style="left:154px;top:57px" width="14" height="8"><path d="M1,1.5 H4 M2.5,1.5 V4 M0.8,4 H4.2 M2.5,4 V7" stroke="#202020" stroke-width="0.9"/><path d="M6,6 L9,2 M7.5,2 H9.2 V3.5" stroke="#202020" stroke-width="0.9" fill="none"/><path d="M10.5,1.5 L13.5,6.5 M13.5,1.5 L10.5,6.5" stroke="#202020" stroke-width="0.9"/></svg><svg style="left:0;top:0" width="903" height="508"><polygon points="116.70,69.10 119.70,69.10 118.20,70.90" fill="#303030"/></svg><span class="t" style="left:121px;top:67.5px;font-size:6.4px;line-height:6.4px;color:#303030;transform:scaleX(0.586);">Name</span><div style="left:162px;top:65px;width:6px;height:9px;background:#f8f8f8;border:1px solid #c8c8c8"></div><svg style="left:0;top:0" width="903" height="508"><polygon points="163.90,71.26 167.10,71.26 165.50,69.34" fill="#202020"/></svg><svg style="left:124px;top:75.40px" width="6" height="8"><path d="M3,0.2 L5.8,4 L3,7.8 L0.2,4Z" fill="#20a8f0"/><path d="M3,0.2 L5.8,4 L3,4.5 L0.2,4Z" fill="#80e0ff"/></svg><span class="t" style="left:131px;top:76.5px;font-size:6.4px;line-height:6.4px;color:#e8ecff;transform:scaleX(0.640);">clk</span><svg style="left:124px;top:83.80px" width="6" height="8"><path d="M3,0.2 L5.8,4 L3,7.8 L0.2,4Z" fill="#20a8f0"/><path d="M3,0.2 L5.8,4 L3,4.5 L0.2,4Z" fill="#80e0ff"/></svg><span class="t" style="left:131px;top:84.9px;font-size:6.4px;line-height:6.4px;color:#e8ecff;transform:scaleX(0.640);">global_reset</span><svg style="left:124px;top:92.20px" width="6" height="8"><path d="M3,0.2 L5.8,4 L3,7.8 L0.2,4Z" fill="#20a8f0"/><path d="M3,0.2 L5.8,4 L3,4.5 L0.2,4Z" fill="#80e0ff"/></svg><span class="t" style="left:131px;top:93.3px;font-size:6.4px;line-height:6.4px;color:#e8ecff;transform:scaleX(0.640);">i_pulses</span><svg style="left:124px;top:100.60px" width="6" height="8"><path d="M3,0.2 L5.8,4 L3,7.8 L0.2,4Z" fill="#20a8f0"/><path d="M3,0.2 L5.8,4 L3,4.5 L0.2,4Z" fill="#80e0ff"/></svg><span class="t" style="left:131px;top:101.7px;font-size:6.4px;line-height:6.4px;color:#e8ecff;transform:scaleX(0.640);">o_pulses</span><div style="left:162px;top:257px;width:6px;height:7px;background:#f8f8f8;border:1px solid #c0c0c0"></div><svg style="left:0;top:0" width="903" height="508"><polygon points="163.90,260.34 167.10,260.34 165.50,262.26" fill="#202020"/></svg><div style="left:117px;top:265px;width:6px;height:9px;background:#fafafa;border:1px solid #c8c8c8"></div><div style="left:123px;top:265px;width:15px;height:9px;background:#f0f0f0;border:1px solid #c8c8c8"></div><div style="left:156px;top:265px;width:6px;height:9px;background:#fafafa;border:1px solid #c8c8c8"></div><svg style="left:0;top:0" width="903" height="508"><polygon points="120.96,268.40 120.96,271.60 119.04,270.00" fill="#202020"/></svg><svg style="left:0;top:0" width="903" height="508"><polygon points="158.54,268.40 158.54,271.60 160.46,270.00" fill="#202020"/></svg><div style="left:116px;top:278px;width:52px;height:9px;background:linear-gradient(#f4f4f4,#e0e0e0)"></div><svg style="left:117px;top:279px" width="8" height="8"><circle cx="4" cy="4" r="3.5" fill="#4070b0"/><circle cx="4" cy="4" r="1.5" fill="#e0e8f8"/></svg><span class="t" style="left:124px;top:279.5px;font-size:6.4px;line-height:6.4px;color:#202020;transform:scaleX(0.628);">ses (Active)</span><div style="left:149px;top:281px;width:3px;height:3px;border-top:1px solid #c8c8c8;border-bottom:1px solid #c8c8c8"></div><svg style="left:154px;top:279px" width="14" height="8"><path d="M1,1.5 H4 M2.5,1.5 V4 M0.8,4 H4.2 M2.5,4 V7" stroke="#202020" stroke-width="0.9"/><path d="M6,6 L9,2 M7.5,2 H9.2 V3.5" stroke="#202020" stroke-width="0.9" fill="none"/><path d="M10.5,1.5 L13.5,6.5 M13.5,1.5 L10.5,6.5" stroke="#202020" stroke-width="0.9"/></svg><svg style="left:0;top:0" width="903" height="508"><polygon points="116.70,291.10 119.70,291.10 118.20,292.90" fill="#303030"/></svg><span class="t" style="left:121px;top:289.5px;font-size:6.4px;line-height:6.4px;color:#303030;transform:scaleX(0.586);">Name</span><div style="left:162px;top:287px;width:6px;height:9px;background:#f8f8f8;border:1px solid #c8c8c8"></div><div style="left:162px;top:479px;width:6px;height:8px;background:#f8f8f8;border:1px solid #c0c0c0"></div><div style="left:117px;top:488px;width:6px;height:8px;background:#fafafa;border:1px solid #c8c8c8"></div><div style="left:123px;top:488px;width:9px;height:8px;background:#f0f0f0;border:1px solid #c8c8c8"></div><div style="left:156px;top:488px;width:6px;height:8px;background:#fafafa;border:1px solid #c8c8c8"></div><svg style="left:0;top:0" width="903" height="508"><polygon points="120.96,490.40 120.96,493.60 119.04,492.00" fill="#202020"/></svg><svg style="left:0;top:0" width="903" height="508"><polygon points="158.54,490.40 158.54,493.60 160.46,492.00" fill="#202020"/></svg><svg style="left:173px;top:57px" width="8" height="8"><rect x="0" y="0" width="7" height="8" fill="#103810"/><path d="M1,6 L3,2 L5,6" stroke="#30c030" stroke-width="0.8" fill="none"/><rect x="5" y="0" width="2" height="3" fill="#3050e0"/></svg><span class="t" style="left:181px;top:58px;font-size:6.6px;line-height:6.6px;color:#101828;transform:scaleX(0.625);">Wave -Default</span><div style="left:208px;top:59px;width:410px;height:4px;border-top:1px solid #7890b0;border-bottom:1px solid #7890b0"></div><svg style="left:617px;top:57px" width="15" height="8"><path d="M1,1.5 H4 M2.5,1.5 V4 M0.8,4 H4.2 M2.5,4 V7" stroke="#202020" stroke-width="0.9"/><path d="M6,6 L9,2 M7.5,2 H9.2 V3.5" stroke="#202020" stroke-width="0.9" fill="none"/><path d="M10.5,1.5 L13.5,6.5 M13.5,1.5 L10.5,6.5" stroke="#202020" stroke-width="0.9"/></svg><div style="left:624px;top:66px;width:7px;height:10px;background:#707070"></div><div style="left:624px;top:78px;width:7px;height:7px;background:#fafafa;border:1px solid #c8c8c8"></div><svg style="left:0;top:0" width="903" height="508"><polygon points="626.54,80.40 626.54,83.60 628.46,82.00" fill="#202020"/></svg><div style="left:624px;top:443px;width:7px;height:7px;background:#fafafa;border:1px solid #c8c8c8"></div><svg style="left:0;top:0" width="903" height="508"><polygon points="625.90,446.34 629.10,446.34 627.50,448.26" fill="#202020"/></svg><div style="left:624px;top:453px;width:7px;height:20px;background:#8a8a8a"></div><div style="left:624px;top:474px;width:7px;height:8px;background:#8a8a8a"></div><div style="left:631px;top:66px;width:2px;height:417px;background:#d8d8d8"></div><div style="left:172px;top:473px;width:452px;height:10px;background:#e6e6e6"></div><div style="left:172px;top:482px;width:452px;height:1px;background:#808080"></div><div style="left:174px;top:474px;width:55px;height:8px;background:#f4f4f4;border:1px solid #d0d0d0"></div><div style="left:174px;top:474px;width:7px;height:8px;background:#fafafa;border:1px solid #d0d0d0"></div><div style="left:181px;top:474px;width:26px;height:8px;background:#ececec;border:1px solid #c8c8c8"></div><div style="left:223px;top:474px;width:6px;height:8px;background:#fafafa;border:1px solid #d0d0d0"></div><svg style="left:0;top:0" width="903" height="508"><polygon points="177.96,476.40 177.96,479.60 176.04,478.00" fill="#101010"/></svg><svg style="left:0;top:0" width="903" height="508"><polygon points="225.54,476.40 225.54,479.60 227.46,478.00" fill="#101010"/></svg><div style="left:230px;top:474px;width:35px;height:8px;background:#f4f4f4;border:1px solid #d0d0d0"></div><svg style="left:0;top:0" width="903" height="508"><polygon points="233.96,476.40 233.96,479.60 232.04,478.00" fill="#909090"/></svg><svg style="left:0;top:0" width="903" height="508"><polygon points="261.54,476.40 261.54,479.60 263.46,478.00" fill="#909090"/></svg><div style="left:266px;top:474px;width:358px;height:8px;background:#c8c8c8;border-bottom:1px solid #b0b0b0"></div><div style="left:266px;top:474px;width:7px;height:8px;background:#fafafa;border:1px solid #d0d0d0"></div><svg style="left:0;top:0" width="903" height="508"><polygon points="269.96,476.40 269.96,479.60 268.04,478.00" fill="#101010"/></svg><div style="left:614px;top:474px;width:3px;height:8px;background:#f8f0c8"></div><div style="left:617px;top:474px;width:7px;height:8px;background:#fafafa;border:1px solid #d0d0d0"></div><svg style="left:0;top:0" width="903" height="508"><polygon points="619.54,476.40 619.54,479.60 621.46,478.00" fill="#101010"/></svg><div style="left:8px;top:484px;width:105px;height:13px;background:#f0f0f0"></div><div style="left:8px;top:484px;width:105px;height:1px;background:#808080"></div><div style="left:9px;top:485px;width:26px;height:12px;background:linear-gradient(#e4e4e4,#d0d0d0);border:1px solid #a8a8a8;border-top:0;border-radius:0 0 2px 2px"></div><svg style="left:11px;top:486px" width="7" height="9"><rect x="0.5" y="1" width="2" height="8" fill="#d04040"/><rect x="2.5" y="0" width="2" height="9" fill="#4060c0"/><rect x="4.5" y="2" width="2" height="7" fill="#40a040"/></svg><span class="t" style="left:19px;top:487.5px;font-size:6.4px;line-height:6.4px;color:#303030;transform:scaleX(0.665);">Library</span><span class="t" style="left:28px;top:487.5px;font-size:5.6px;line-height:5.6px;color:#a0a0a0;transform:scaleX(1.071);">x</span><div style="left:35px;top:485px;width:20px;height:12px;background:linear-gradient(#fdfdfd,#f4f4f4);border:1px solid #a8a8a8;border-top:0;border-radius:0 0 2px 2px"></div><svg style="left:37px;top:486px" width="8" height="9"><path d="M1.5,8 V3.5 A2.5,2.5 0 0 1 6.5,3.5 V8" fill="none" stroke="#707080" stroke-width="0.8"/><circle cx="1.8" cy="7.5" r="1.4" fill="#901818"/><circle cx="6.2" cy="7.5" r="1.4" fill="#901818"/></svg><span class="t" style="left:45px;top:487.5px;font-size:6.4px;line-height:6.4px;color:#303030;transform:scaleX(0.603);">sim</span><span class="t" style="left:48px;top:487.5px;font-size:5.6px;line-height:5.6px;color:#a0a0a0;transform:scaleX(1.071);">x</span><div style="left:106px;top:486px;width:8px;height:8px;background:#e8e8e8;border:1px solid #c0c0c0"></div><svg style="left:0;top:0" width="903" height="508"><polygon points="109.46,489.40 109.46,492.60 107.54,491.00" fill="#606060"/></svg><svg style="left:0;top:0" width="903" height="508"><polygon points="111.04,489.40 111.04,492.60 112.96,491.00" fill="#606060"/></svg><div style="left:172px;top:483px;width:461px;height:14px;background:#f0f0f0"></div><div style="left:172px;top:483px;width:452px;height:1px;background:#909090"></div><div style="left:172px;top:485px;width:30px;height:12px;background:linear-gradient(#e4e4e4,#d0d0d0);border:1px solid #a8a8a8;border-top:0;border-radius:0 0 2px 2px"></div><svg style="left:174px;top:486px" width="8" height="9"><rect x="0" y="0" width="7" height="9" fill="#2080c0"/><path d="M0,0 L7,9 M7,0 L0,9" stroke="#103050" stroke-width="1"/></svg><span class="t" style="left:182px;top:487.5px;font-size:6.4px;line-height:6.4px;color:#303030;transform:scaleX(0.723);">Dataflow</span><span class="t" style="left:195px;top:487.5px;font-size:5.6px;line-height:5.6px;color:#a0a0a0;transform:scaleX(1.071);">x</span><div style="left:203px;top:485px;width:20px;height:12px;background:linear-gradient(#e4e4e4,#d0d0d0);border:1px solid #a8a8a8;border-top:0;border-radius:0 0 2px 2px"></div><svg style="left:205px;top:486px" width="8" height="9"><rect x="0" y="0" width="7" height="7" fill="#4060e0"/><rect x="1" y="1" width="5" height="5" fill="#d0d8ff"/><rect x="1" y="7" width="5" height="2" fill="#606060"/></svg><span class="t" style="left:213px;top:487.5px;font-size:6.4px;line-height:6.4px;color:#303030;transform:scaleX(0.803);">List</span><span class="t" style="left:216px;top:487.5px;font-size:5.6px;line-height:5.6px;color:#a0a0a0;transform:scaleX(1.071);">x</span><div style="left:224px;top:485px;width:24px;height:12px;background:linear-gradient(#fdfdfd,#f4f4f4);border:1px solid #a8a8a8;border-top:0;border-radius:0 0 2px 2px"></div><svg style="left:226px;top:486px" width="8" height="9"><rect x="0" y="0" width="7" height="9" fill="#103810"/><path d="M1,7 L3,2 L5,7" stroke="#30c030" stroke-width="0.8" fill="none"/></svg><span class="t" style="left:234px;top:487.5px;font-size:6.4px;line-height:6.4px;color:#303030;transform:scaleX(0.682);">Wave</span><span class="t" style="left:241px;top:487.5px;font-size:5.6px;line-height:5.6px;color:#a0a0a0;transform:scaleX(1.071);">x</span><div style="left:624px;top:484px;width:8px;height:9px;background:#e8e8e8;border:1px solid #c0c0c0"></div><svg style="left:0;top:0" width="903" height="508"><polygon points="627.46,487.90 627.46,491.10 625.54,489.50" fill="#606060"/></svg><svg style="left:0;top:0" width="903" height="508"><polygon points="629.04,487.90 629.04,491.10 630.96,489.50" fill="#606060"/></svg><div style="left:8px;top:497px;width:625px;height:11px;background:#f0f0f0;border-top:1px solid #d8d8d8"></div><div style="left:8px;top:498px;width:70px;height:10px;border-right:1px solid #c0c0c0"></div><span class="t" style="left:9.5px;top:500px;font-size:6.4px;line-height:6.4px;color:#303030;transform:scaleX(0.625);">Now: 10 us  Delta: 7</span><div style="left:80px;top:498px;width:0;height:10px;border-left:1px solid #c0c0c0"></div><span class="t" style="left:81px;top:500px;font-size:6.4px;line-height:6.4px;color:#303030;transform:scaleX(0.628);">/top_tb/inster_top/inster_fifo/read_addr [2:0]</span><div style="left:566px;top:498px;width:62px;height:10px;border-left:1px solid #c0c0c0;border-right:1px solid #c0c0c0"></div><span class="t" style="left:568px;top:500px;font-size:6.4px;line-height:6.4px;color:#303030;transform:scaleX(0.594);">9948560 ps to 9967206 ps</span></div></body></html>
